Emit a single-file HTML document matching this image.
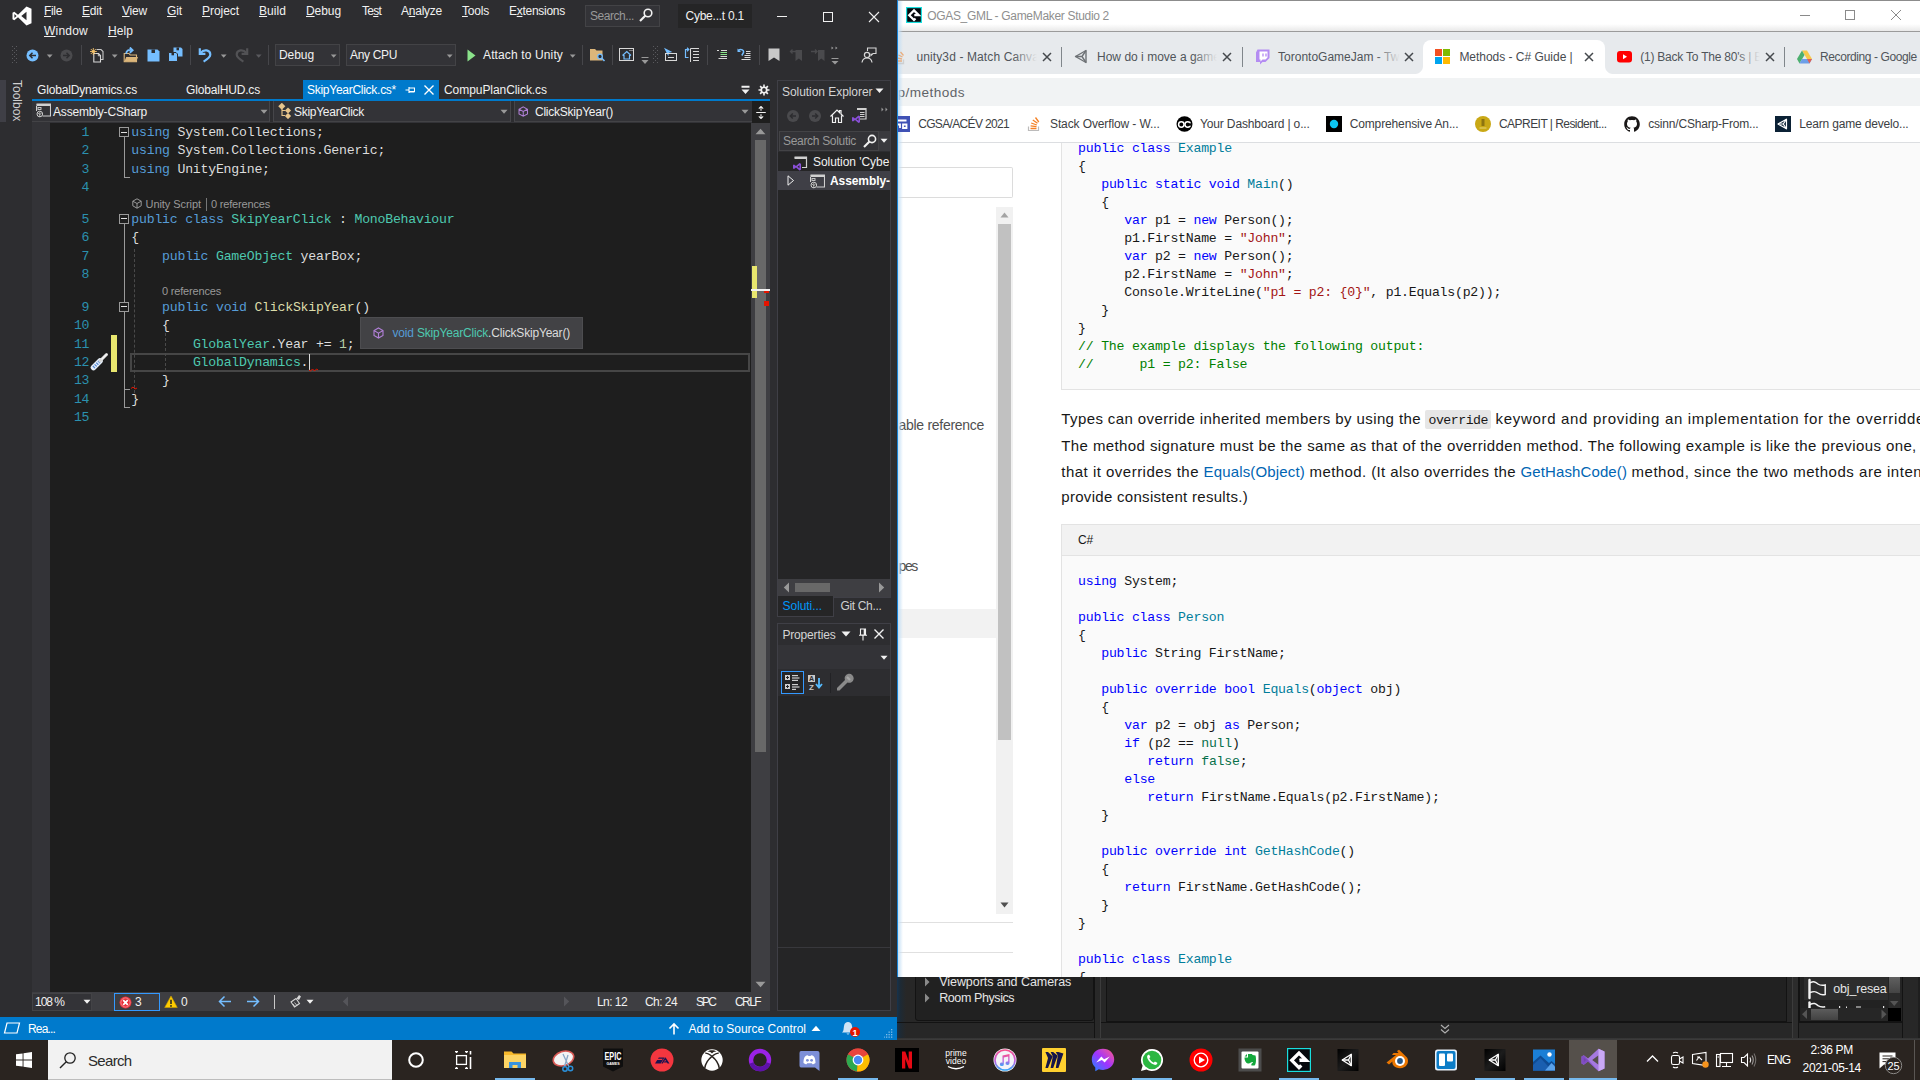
<!DOCTYPE html>
<html lang="en"><head><meta charset="utf-8"><title>Screenshot</title>
<style>
html,body{margin:0;padding:0;background:#2d2d30;}
body{width:1920px;height:1080px;position:relative;overflow:hidden;font-family:"Liberation Sans",sans-serif;}
.a{position:absolute;box-sizing:border-box;}
.t{white-space:pre;}
u{text-decoration:underline;text-underline-offset:1px;}
</style></head><body>
<div class="a" style="left:0px;top:0px;width:897px;height:1040px;background:#2d2d30;"></div>
<div class="a t" style="left:44px;top:3.00px;font:12px/16px 'Liberation Sans',sans-serif;color:#f1f1f1;letter-spacing:-0.334px;"><u>F</u>ile</div>
<div class="a t" style="left:82px;top:3.00px;font:12px/16px 'Liberation Sans',sans-serif;color:#f1f1f1;letter-spacing:-0.169px;"><u>E</u>dit</div>
<div class="a t" style="left:122px;top:3.00px;font:12px/16px 'Liberation Sans',sans-serif;color:#f1f1f1;letter-spacing:-0.198px;"><u>V</u>iew</div>
<div class="a t" style="left:167px;top:3.00px;font:12px/16px 'Liberation Sans',sans-serif;color:#f1f1f1;letter-spacing:-0.111px;"><u>G</u>it</div>
<div class="a t" style="left:202px;top:3.00px;font:12px/16px 'Liberation Sans',sans-serif;color:#f1f1f1;letter-spacing:-0.050px;"><u>P</u>roject</div>
<div class="a t" style="left:259px;top:3.00px;font:12px/16px 'Liberation Sans',sans-serif;color:#f1f1f1;letter-spacing:0.063px;"><u>B</u>uild</div>
<div class="a t" style="left:306px;top:3.00px;font:12px/16px 'Liberation Sans',sans-serif;color:#f1f1f1;letter-spacing:-0.072px;"><u>D</u>ebug</div>
<div class="a t" style="left:362px;top:3.00px;font:12px/16px 'Liberation Sans',sans-serif;color:#f1f1f1;letter-spacing:-0.752px;">Te<u>s</u>t</div>
<div class="a t" style="left:401px;top:3.00px;font:12px/16px 'Liberation Sans',sans-serif;color:#f1f1f1;letter-spacing:-0.242px;">A<u>n</u>alyze</div>
<div class="a t" style="left:462px;top:3.00px;font:12px/16px 'Liberation Sans',sans-serif;color:#f1f1f1;letter-spacing:-0.203px;"><u>T</u>ools</div>
<div class="a t" style="left:509px;top:3.00px;font:12px/16px 'Liberation Sans',sans-serif;color:#f1f1f1;letter-spacing:-0.270px;">E<u>x</u>tensions</div>
<div class="a t" style="left:44px;top:23.00px;font:12px/16px 'Liberation Sans',sans-serif;color:#f1f1f1;letter-spacing:0.220px;"><u>W</u>indow</div>
<div class="a t" style="left:108px;top:23.00px;font:12px/16px 'Liberation Sans',sans-serif;color:#f1f1f1;letter-spacing:0.080px;"><u>H</u>elp</div>
<div class="a" style="left:585px;top:5px;width:75px;height:22px;background:#333337;border:1px solid #434346;"></div>
<div class="a t" style="left:590px;top:8.00px;font:12px/16px 'Liberation Sans',sans-serif;color:#999999;letter-spacing:-0.447px;">Search...</div>
<div class="a" style="left:678px;top:4px;width:74px;height:24px;background:#252526;"></div>
<div class="a t" style="left:685.5px;top:8.00px;font:12px/16px 'Liberation Sans',sans-serif;color:#f1f1f1;letter-spacing:-0.239px;">Cybe...t 0.1</div>
<div class="a" style="left:275px;top:44px;width:65px;height:22px;background:#333337;border:1px solid #434346;"></div>
<div class="a t" style="left:279px;top:47.00px;font:12px/16px 'Liberation Sans',sans-serif;color:#f1f1f1;letter-spacing:-0.072px;">Debug</div>
<div class="a" style="left:346px;top:44px;width:110px;height:22px;background:#333337;border:1px solid #434346;"></div>
<div class="a t" style="left:350px;top:47.00px;font:12px/16px 'Liberation Sans',sans-serif;color:#f1f1f1;letter-spacing:-0.335px;">Any CPU</div>
<div class="a t" style="left:483px;top:47.00px;font:12px/16px 'Liberation Sans',sans-serif;color:#f1f1f1;letter-spacing:0.131px;">Attach to Unity</div>
<div class="a" style="left:81px;top:45px;width:1px;height:20px;background:#46464a;"></div>
<div class="a" style="left:190px;top:45px;width:1px;height:20px;background:#46464a;"></div>
<div class="a" style="left:268px;top:45px;width:1px;height:20px;background:#46464a;"></div>
<div class="a" style="left:582px;top:45px;width:1px;height:20px;background:#46464a;"></div>
<div class="a" style="left:612px;top:45px;width:1px;height:20px;background:#46464a;"></div>
<div class="a" style="left:707px;top:45px;width:1px;height:20px;background:#46464a;"></div>
<div class="a" style="left:759px;top:45px;width:1px;height:20px;background:#46464a;"></div>
<div class="a" style="left:0px;top:80px;width:6px;height:42px;background:#3f3f46;"></div>
<div class="a t" style="left:10px;top:80px;width:14px;height:42px;writing-mode:vertical-rl;font:12px/14px 'Liberation Sans',sans-serif;color:#d0d0d0;letter-spacing:0;">Toolbox</div>
<div class="a t" style="left:37px;top:82.00px;font:12px/16px 'Liberation Sans',sans-serif;color:#f1f1f1;letter-spacing:-0.159px;">GlobalDynamics.cs</div>
<div class="a t" style="left:186px;top:82.00px;font:12px/16px 'Liberation Sans',sans-serif;color:#f1f1f1;letter-spacing:-0.168px;">GlobalHUD.cs</div>
<div class="a" style="left:303px;top:80px;width:136px;height:20px;background:#007acc;"></div>
<div class="a t" style="left:307px;top:82.00px;font:12px/16px 'Liberation Sans',sans-serif;color:#ffffff;letter-spacing:-0.270px;">SkipYearClick.cs*</div>
<div class="a t" style="left:444px;top:82.00px;font:12px/16px 'Liberation Sans',sans-serif;color:#f1f1f1;letter-spacing:-0.061px;">CompuPlanClick.cs</div>
<div class="a" style="left:32px;top:99px;width:738px;height:2px;background:#007acc;"></div>
<div class="a" style="left:32px;top:101px;width:738px;height:22px;background:#333337;"></div>
<div class="a" style="left:32px;top:121px;width:720px;height:1px;background:#434346;"></div>
<div class="a" style="left:32px;top:122px;width:720px;height:1px;background:#333337;"></div>
<div class="a" style="left:269px;top:101px;width:1px;height:21px;background:#46464a;"></div>
<div class="a" style="left:273px;top:101px;width:1px;height:21px;background:#46464a;"></div>
<div class="a" style="left:270px;top:101px;width:3px;height:21px;background:#2d2d30;"></div>
<div class="a" style="left:510px;top:101px;width:1px;height:21px;background:#46464a;"></div>
<div class="a" style="left:514px;top:101px;width:1px;height:21px;background:#46464a;"></div>
<div class="a" style="left:511px;top:101px;width:3px;height:21px;background:#2d2d30;"></div>
<div class="a" style="left:752px;top:101px;width:18px;height:22px;background:#1e1e1e;"></div>
<div class="a t" style="left:53px;top:104.00px;font:12px/16px 'Liberation Sans',sans-serif;color:#f1f1f1;letter-spacing:-0.180px;">Assembly-CSharp</div>
<div class="a t" style="left:294px;top:104.00px;font:12px/16px 'Liberation Sans',sans-serif;color:#f1f1f1;letter-spacing:-0.276px;">SkipYearClick</div>
<div class="a t" style="left:535px;top:104.00px;font:12px/16px 'Liberation Sans',sans-serif;color:#f1f1f1;letter-spacing:-0.239px;">ClickSkipYear()</div>
<div class="a" style="left:32px;top:123px;width:719px;height:869px;background:#1e1e1e;"></div>
<div class="a" style="left:32px;top:123px;width:18px;height:869px;background:#333337;"></div>
<div class="a" style="left:751px;top:123px;width:19px;height:869px;background:#3e3e42;"></div>
<div class="a" style="left:755px;top:140px;width:11px;height:612px;background:#686868;"></div>
<div class="a" style="left:111px;top:334.5px;width:6px;height:37px;background:#e8e66e;"></div>
<div class="a" style="left:130px;top:353px;width:620px;height:18.5px;background:transparent;border:2px solid #464646;"></div>
<div class="a t" style="left:131.30px;top:124.00px;font:13.2px/17px 'Liberation Mono',monospace;letter-spacing:-0.221px;color:#dcdcdc"><span style="color:#569cd6">using</span> System.Collections;</div>
<div class="a t" style="left:131.30px;top:142.00px;font:13.2px/17px 'Liberation Mono',monospace;letter-spacing:-0.221px;color:#dcdcdc"><span style="color:#569cd6">using</span> System.Collections.Generic;</div>
<div class="a t" style="left:131.30px;top:161.00px;font:13.2px/17px 'Liberation Mono',monospace;letter-spacing:-0.221px;color:#dcdcdc"><span style="color:#569cd6">using</span> UnityEngine;</div>
<div class="a t" style="left:131.30px;top:211.00px;font:13.2px/17px 'Liberation Mono',monospace;letter-spacing:-0.221px;color:#dcdcdc"><span style="color:#569cd6">public class</span> <span style="color:#4ec9b0">SkipYearClick</span> : <span style="color:#4ec9b0">MonoBehaviour</span></div>
<div class="a t" style="left:131.30px;top:229.00px;font:13.2px/17px 'Liberation Mono',monospace;letter-spacing:-0.221px;color:#dcdcdc">{</div>
<div class="a t" style="left:162.10px;top:248.00px;font:13.2px/17px 'Liberation Mono',monospace;letter-spacing:-0.221px;color:#dcdcdc"><span style="color:#569cd6">public</span> <span style="color:#4ec9b0">GameObject</span> yearBox;</div>
<div class="a t" style="left:162.10px;top:299.00px;font:13.2px/17px 'Liberation Mono',monospace;letter-spacing:-0.221px;color:#dcdcdc"><span style="color:#569cd6">public void</span> <span style="color:#dcdcaa">ClickSkipYear</span>()</div>
<div class="a t" style="left:162.10px;top:317.00px;font:13.2px/17px 'Liberation Mono',monospace;letter-spacing:-0.221px;color:#dcdcdc">{</div>
<div class="a t" style="left:192.90px;top:336.00px;font:13.2px/17px 'Liberation Mono',monospace;letter-spacing:-0.221px;color:#dcdcdc"><span style="color:#4ec9b0">GlobalYear</span>.Year += <span style="color:#b5cea8">1</span>;</div>
<div class="a t" style="left:192.90px;top:354.00px;font:13.2px/17px 'Liberation Mono',monospace;letter-spacing:-0.221px;color:#dcdcdc"><span style="color:#4ec9b0">GlobalDynamics</span>.</div>
<div class="a t" style="left:162.10px;top:372.00px;font:13.2px/17px 'Liberation Mono',monospace;letter-spacing:-0.221px;color:#dcdcdc">}</div>
<div class="a t" style="left:131.30px;top:391.00px;font:13.2px/17px 'Liberation Mono',monospace;letter-spacing:-0.221px;color:#dcdcdc">}</div>
<div class="a t" style="left:81.60px;top:124.00px;font:13.2px/17px 'Liberation Mono',monospace;letter-spacing:-0.221px;color:#2b91af">1</div>
<div class="a t" style="left:81.60px;top:142.00px;font:13.2px/17px 'Liberation Mono',monospace;letter-spacing:-0.221px;color:#2b91af">2</div>
<div class="a t" style="left:81.60px;top:161.00px;font:13.2px/17px 'Liberation Mono',monospace;letter-spacing:-0.221px;color:#2b91af">3</div>
<div class="a t" style="left:81.60px;top:179.00px;font:13.2px/17px 'Liberation Mono',monospace;letter-spacing:-0.221px;color:#2b91af">4</div>
<div class="a t" style="left:81.60px;top:211.00px;font:13.2px/17px 'Liberation Mono',monospace;letter-spacing:-0.221px;color:#2b91af">5</div>
<div class="a t" style="left:81.60px;top:229.00px;font:13.2px/17px 'Liberation Mono',monospace;letter-spacing:-0.221px;color:#2b91af">6</div>
<div class="a t" style="left:81.60px;top:248.00px;font:13.2px/17px 'Liberation Mono',monospace;letter-spacing:-0.221px;color:#2b91af">7</div>
<div class="a t" style="left:81.60px;top:266.00px;font:13.2px/17px 'Liberation Mono',monospace;letter-spacing:-0.221px;color:#2b91af">8</div>
<div class="a t" style="left:81.60px;top:299.00px;font:13.2px/17px 'Liberation Mono',monospace;letter-spacing:-0.221px;color:#2b91af">9</div>
<div class="a t" style="left:73.90px;top:317.00px;font:13.2px/17px 'Liberation Mono',monospace;letter-spacing:-0.221px;color:#2b91af">10</div>
<div class="a t" style="left:73.90px;top:336.00px;font:13.2px/17px 'Liberation Mono',monospace;letter-spacing:-0.221px;color:#2b91af">11</div>
<div class="a t" style="left:73.90px;top:354.00px;font:13.2px/17px 'Liberation Mono',monospace;letter-spacing:-0.221px;color:#2b91af">12</div>
<div class="a t" style="left:73.90px;top:372.00px;font:13.2px/17px 'Liberation Mono',monospace;letter-spacing:-0.221px;color:#2b91af">13</div>
<div class="a t" style="left:73.90px;top:391.00px;font:13.2px/17px 'Liberation Mono',monospace;letter-spacing:-0.221px;color:#2b91af">14</div>
<div class="a t" style="left:73.90px;top:409.00px;font:13.2px/17px 'Liberation Mono',monospace;letter-spacing:-0.221px;color:#2b91af">15</div>
<div class="a t" style="left:145.5px;top:197.00px;font:11px/14px 'Liberation Sans',sans-serif;color:#999999;letter-spacing:-0.061px;">Unity Script</div>
<div class="a" style="left:206px;top:198px;width:1px;height:13px;background:#777777;"></div>
<div class="a t" style="left:211px;top:197.00px;font:11px/14px 'Liberation Sans',sans-serif;color:#999999;letter-spacing:-0.179px;">0 references</div>
<div class="a t" style="left:162px;top:284.00px;font:11px/14px 'Liberation Sans',sans-serif;color:#999999;letter-spacing:-0.179px;">0 references</div>
<div class="a" style="left:308.5px;top:354px;width:1px;height:16px;background:#dcdcdc;"></div>
<div class="a" style="left:360px;top:317px;width:223px;height:32px;background:#424245;border:1px solid #4d4d50;"></div>
<div class="a t" style="left:392.5px;top:325.00px;font:12px/16px 'Liberation Sans',sans-serif;color:#dcdcdc;letter-spacing:-0.187px;"><span style="color:#569cd6">void</span> <span style="color:#4ec9b0">SkipYearClick</span><span style="color:#dcdcdc">.ClickSkipYear()</span></div>
<div class="a" style="left:32px;top:992px;width:738px;height:19px;background:#3e3e42;"></div>
<div class="a" style="left:32px;top:993px;width:60px;height:18px;background:#333337;border:1px solid #434346;"></div>
<div class="a t" style="left:35px;top:994.00px;font:12px/16px 'Liberation Sans',sans-serif;color:#f1f1f1;letter-spacing:-1.005px;">108 %</div>
<div class="a" style="left:114px;top:993px;width:46px;height:18px;background:transparent;border:1px solid #3399ff;"></div>
<div class="a t" style="left:135px;top:994.00px;font:12px/16px 'Liberation Sans',sans-serif;color:#f1f1f1;">3</div>
<div class="a t" style="left:181px;top:994.00px;font:12px/16px 'Liberation Sans',sans-serif;color:#f1f1f1;">0</div>
<div class="a" style="left:274px;top:995px;width:1px;height:14px;background:#c8c8c8;"></div>
<div class="a t" style="left:597px;top:994.00px;font:12px/16px 'Liberation Sans',sans-serif;color:#f1f1f1;letter-spacing:-0.561px;">Ln: 12</div>
<div class="a t" style="left:645px;top:994.00px;font:12px/16px 'Liberation Sans',sans-serif;color:#f1f1f1;letter-spacing:-0.559px;">Ch: 24</div>
<div class="a t" style="left:696px;top:994.00px;font:12px/16px 'Liberation Sans',sans-serif;color:#f1f1f1;letter-spacing:-1.891px;">SPC</div>
<div class="a t" style="left:735px;top:994.00px;font:12px/16px 'Liberation Sans',sans-serif;color:#f1f1f1;letter-spacing:-1.584px;">CRLF</div>
<div class="a" style="left:0px;top:1017px;width:897px;height:23px;background:#007acc;"></div>
<div class="a t" style="left:28px;top:1021.00px;font:12px/16px 'Liberation Sans',sans-serif;color:#ffffff;letter-spacing:-0.836px;">Rea...</div>
<div class="a t" style="left:688.5px;top:1021.00px;font:12px/16px 'Liberation Sans',sans-serif;color:#ffffff;letter-spacing:-0.027px;">Add to Source Control</div>
<div class="a" style="left:777px;top:80px;width:114px;height:518px;background:#2d2d30;border:1px solid #3f3f46;"></div>
<div class="a t" style="left:782px;top:84.00px;font:12px/16px 'Liberation Sans',sans-serif;color:#d4d4d4;letter-spacing:-0.052px;">Solution Explorer</div>
<svg class="a" style="left:875px;top:88px;" width="9" height="6" viewBox="0 0 9 6"><path d="M0.500 0.500 H8.500 L4.500 5Z" fill="#f1f1f1"/></svg>
<div class="a" style="left:779px;top:131px;width:100px;height:20px;background:#333337;border:1px solid #434346;"></div>
<div class="a" style="left:879px;top:131px;width:11px;height:20px;background:#3a3a3e;"></div>
<div class="a t" style="left:783px;top:133.00px;font:12px/16px 'Liberation Sans',sans-serif;color:#999999;letter-spacing:-0.312px;">Search Solutic</div>
<div class="a" style="left:778px;top:152px;width:112px;height:427px;background:#252526;"></div>
<div class="a" style="left:778px;top:171px;width:112px;height:19px;background:#3f3f46;"></div>
<div class="a t" style="left:813px;top:154.00px;font:12px/16px 'Liberation Sans',sans-serif;color:#f1f1f1;letter-spacing:-0.050px;">Solution 'Cybe</div>
<div class="a" style="left:830px;top:172px;width:60px;height:18px;overflow:hidden"><div class="t" style="font:bold 12px/18px 'Liberation Sans',sans-serif;color:#fff;letter-spacing:-0.080px">Assembly-C</div></div>
<svg class="a" style="left:787px;top:175px;" width="8" height="11" viewBox="0 0 8 11"><path d="M1 0.800 L6.500 5.500 L1 10.200Z" fill="none" stroke="#f1f1f1" stroke-width="1"/></svg>
<div class="a" style="left:778px;top:579px;width:112px;height:18px;background:#3e3e42;"></div>
<div class="a" style="left:795px;top:583px;width:35px;height:9px;background:#686868;"></div>
<svg class="a" style="left:783px;top:582px;" width="8" height="11" viewBox="0 0 8 11"><path d="M6 0.500 V10.500 L0.800 5.500Z" fill="#999"/></svg>
<svg class="a" style="left:877px;top:582px;" width="8" height="11" viewBox="0 0 8 11"><path d="M2 0.500 V10.500 L7.200 5.500Z" fill="#999"/></svg>
<div class="a" style="left:777px;top:596px;width:57px;height:21px;background:#252526;border:1px solid #3f3f46;"></div>
<div class="a" style="left:778px;top:596px;width:55px;height:2px;background:#252526;"></div>
<div class="a t" style="left:782.6px;top:598.00px;font:12px/16px 'Liberation Sans',sans-serif;color:#0097fb;letter-spacing:-0.069px;">Soluti...</div>
<div class="a t" style="left:840.4px;top:598.00px;font:12px/16px 'Liberation Sans',sans-serif;color:#d0d0d0;letter-spacing:-0.323px;">Git Ch...</div>
<div class="a" style="left:777px;top:623px;width:114px;height:388px;background:#2d2d30;border:1px solid #3f3f46;"></div>
<div class="a t" style="left:782.4px;top:627.00px;font:12px/16px 'Liberation Sans',sans-serif;color:#d4d4d4;letter-spacing:-0.159px;">Properties</div>
<svg class="a" style="left:841px;top:631px;" width="10" height="6" viewBox="0 0 10 6"><path d="M0.500 0.500 H9.500 L5 5.500Z" fill="#f1f1f1"/></svg>
<svg class="a" style="left:858px;top:628px;" width="10" height="13" viewBox="0 0 10 13"><g fill="none" stroke="#f1f1f1" stroke-width="1.100"><path d="M2.500 1 H7.500 V7 H2.500Z M1 7.200 H9 M5 7.200 V12.500"/><path d="M6.500 1 V7" stroke-width="1.600"/></g></svg>
<svg class="a" style="left:873px;top:628px;" width="12" height="12" viewBox="0 0 12 12"><path d="M1.500 1.500 L10.500 10.500 M10.500 1.500 L1.500 10.500" stroke="#f1f1f1" stroke-width="1.400"/></svg>
<div class="a" style="left:778px;top:645px;width:112px;height:24px;background:#333337;"></div>
<svg class="a" style="left:880px;top:655px;" width="8" height="6" viewBox="0 0 8 6"><path d="M0.500 0.800 H7.500 L4 4.800Z" fill="#f1f1f1"/></svg>
<div class="a" style="left:778px;top:669px;width:112px;height:27px;background:#2d2d30;"></div>
<div class="a" style="left:781px;top:671px;width:23px;height:23px;background:#252526;border:1px solid #3399ff;"></div>
<div class="a" style="left:778px;top:696px;width:112px;height:314px;background:#252526;"></div>
<div class="a" style="left:830px;top:673px;width:1px;height:20px;background:#222225;"></div>
<div class="a" style="left:778px;top:947px;width:112px;height:1px;background:#38383c;"></div>
<svg class="a" style="left:784px;top:674px;" width="18" height="17" viewBox="0 0 18 17"><g fill="#d0d0d0"><rect x="1" y="1" width="5" height="5"/><rect x="1" y="10" width="5" height="5"/><rect x="8" y="1" width="6" height="1.200"/><rect x="8" y="3.400" width="7.500" height="1.200"/><rect x="8" y="5.800" width="6" height="1.200"/><rect x="8" y="10" width="6" height="1.200"/><rect x="8" y="12.400" width="7.500" height="1.200"/><rect x="8" y="14.800" width="4" height="1.200"/></g><path d="M2 3.500 H5 M3.500 2 V5 M2 12.500 H5 M3.500 11 V14" stroke="#252526" stroke-width="1"/></svg>
<svg class="a" style="left:807px;top:674px;" width="17" height="17" viewBox="0 0 17 17"><rect x="1" y="1" width="7" height="7" fill="#c8c8c8"/><text x="4.500" y="7.200" font-family="Liberation Sans,sans-serif" font-weight="700" font-size="7" fill="#2d2d30" text-anchor="middle">A</text><text x="4.500" y="15.500" font-family="Liberation Sans,sans-serif" font-weight="700" font-size="8" fill="#c8c8c8" text-anchor="middle">Z</text><path d="M12 4 V13 M9 10 L12 13.500 L15 10" fill="none" stroke="#55bbff" stroke-width="1.800"/></svg>
<svg class="a" style="left:835px;top:673px;" width="19" height="19" viewBox="0 0 19 19"><path d="M2 16 L10 8 A4.500 4.500 0 1 1 12.500 10.500 L4.500 18.500 L2 18.500Z" fill="#8a8a8a" transform="translate(0 -1)"/><path d="M12 4 L15 7" stroke="#a8a8a8" stroke-width="2.200"/></svg>
<svg class="a" style="left:786px;top:109px;" width="14" height="14" viewBox="0 0 14 14"><circle cx="7" cy="7" r="6" fill="#4a4a4d"/><path d="M10 7 H4.500 M6.800 4.500 L4.300 7 L6.800 9.500" fill="none" stroke="#2d2d30" stroke-width="1.500"/></svg>
<svg class="a" style="left:808px;top:109px;" width="14" height="14" viewBox="0 0 14 14"><circle cx="7" cy="7" r="6" fill="#4a4a4d"/><path d="M4 7 H9.500 M7.200 4.500 L9.700 7 L7.200 9.500" fill="none" stroke="#2d2d30" stroke-width="1.500"/></svg>
<svg class="a" style="left:829px;top:108px;" width="16" height="16" viewBox="0 0 16 16"><path d="M1.500 8.500 L8 2 L10.500 4.500 V2.500 H12 V6 L14.500 8.500 M3.500 7.500 V14.500 H6.500 V10 H9.500 V14.500 H12.500 V7.500" fill="none" stroke="#f1f1f1" stroke-width="1.200"/></svg>
<svg class="a" style="left:851px;top:107px;" width="17" height="17" viewBox="0 0 17 17"><path d="M6 1.500 H15 V12 H9" fill="none" stroke="#d0d0d0" stroke-width="1.200"/><path d="M6 1.500 H15 V3 H6Z" fill="#d0d0d0"/><path d="M9 5.500 H13.500 M9 7.500 H13.500 M9 9.500 H13.500" stroke="#d0d0d0" stroke-width="1"/><path d="M7.500 8.500 L9 9.200 V15.300 L7.500 16 L4 13 L2 14.500 L1 14 V10.500 L2 10 L4 11.500Z M7.500 10.800 L5.500 12.250 L7.500 13.700Z" fill="#8a50d8" fill-rule="evenodd"/></svg>
<svg class="a" style="left:881px;top:107px;" width="8" height="6" viewBox="0 0 8 6"><path d="M0.500 0.500 L2.500 2.500 L0.500 4.500Z M4.500 0.500 L6.500 2.500 L4.500 4.500Z" fill="#999"/></svg>
<svg class="a" style="left:862px;top:133px;" width="16" height="16" viewBox="0 0 16 16"><circle cx="10" cy="6" r="3.600" fill="none" stroke="#f1f1f1" stroke-width="1.600"/><path d="M7.500 8.500 L2 14" stroke="#f1f1f1" stroke-width="2.200"/></svg>
<svg class="a" style="left:880px;top:138px;" width="8" height="6" viewBox="0 0 8 6"><path d="M0.500 0.800 H7.500 L4 4.800Z" fill="#f1f1f1"/></svg>
<svg class="a" style="left:792px;top:155px;" width="16" height="16" viewBox="0 0 16 16"><path d="M2.500 2 H14.500 V12.500 H10" fill="none" stroke="#d0d0d0" stroke-width="1.200"/><path d="M2.500 2 H14.500 V4 H2.500Z" fill="#d0d0d0"/><path d="M7.500 8 L9 8.700 V14.800 L7.500 15.500 L4 12.500 L2 14 L1 13.500 V10 L2 9.500 L4 11Z M7.500 10.300 L5.500 11.750 L7.500 13.200Z" fill="#8a50d8" fill-rule="evenodd"/></svg>
<svg class="a" style="left:810px;top:174px;" width="15" height="15" viewBox="0 0 15 15"><path d="M0.500 1 H14.500 V13 H6.500" fill="none" stroke="#d0d0d0" stroke-width="1.100"/><path d="M0.500 1 H14.500 V3 H0.500Z" fill="#d0d0d0"/><path d="M0.500 3 V8" stroke="#d0d0d0" stroke-width="1.100"/><rect x="2" y="4.500" width="3" height="2" fill="none" stroke="#d0d0d0" stroke-width="0.900"/><circle cx="3.800" cy="11" r="2.800" fill="#2d2d30" stroke="#d0d0d0" stroke-width="1"/><path d="M3.800 9 V14 M2 10.200 L3.800 11.500 L5.600 10.200" fill="none" stroke="#d0d0d0" stroke-width="0.800"/></svg>
<svg class="a" style="left:36px;top:103px;" width="15" height="15" viewBox="0 0 15 15"><path d="M0.500 1 H14.500 V13 H6.500" fill="none" stroke="#d0d0d0" stroke-width="1.100"/><path d="M0.500 1 H14.500 V3 H0.500Z" fill="#d0d0d0"/><path d="M0.500 3 V8" stroke="#d0d0d0" stroke-width="1.100"/><rect x="2" y="4.500" width="3" height="2" fill="none" stroke="#d0d0d0" stroke-width="0.900"/><circle cx="3.800" cy="11" r="2.800" fill="#2d2d30" stroke="#d0d0d0" stroke-width="1"/><path d="M3.800 9 V14 M2 10.200 L3.800 11.500 L5.600 10.200" fill="none" stroke="#d0d0d0" stroke-width="0.800"/></svg>
<svg class="a" style="left:741px;top:85px;" width="10" height="10" viewBox="0 0 10 10"><path d="M0.500 0.800 H8.500 V2.800 H0.500Z M0.500 4.500 H8.500 L4.500 9Z" fill="#f1f1f1"/></svg>
<svg class="a" style="left:758px;top:84px;" width="12" height="12" viewBox="0 0 12 12"><g fill="#f1f1f1"><circle cx="6" cy="6" r="3.600"/><path d="M5.200 0.500 H6.800 V11.500 H5.200Z M0.500 5.200 H11.500 V6.800 H0.500Z"/><path d="M5.200 0.500 H6.800 V11.500 H5.200Z M0.500 5.200 H11.500 V6.800 H0.500Z" transform="rotate(45 6 6)"/></g><circle cx="6" cy="6" r="1.900" fill="#2d2d30"/></svg>
<svg class="a" style="left:405px;top:85px;" width="10" height="10" viewBox="0 0 10 10"><path d="M0.500 5 H4 M4 2 V8 M4 3 H9.500 V6.500 H4 M4 7 H9.500" fill="none" stroke="#fff" stroke-width="1.100"/></svg>
<svg class="a" style="left:423px;top:84px;" width="12" height="12" viewBox="0 0 12 12"><path d="M1.500 1.500 L10.500 10.500 M10.500 1.500 L1.500 10.500" stroke="#fff" stroke-width="1.400"/></svg>
<svg class="a" style="left:260px;top:109px;" width="8" height="6" viewBox="0 0 8 6"><path d="M0.500 0.800 H7.500 L4 4.800Z" fill="#999"/></svg>
<svg class="a" style="left:500px;top:109px;" width="8" height="6" viewBox="0 0 8 6"><path d="M0.500 0.800 H7.500 L4 4.800Z" fill="#999"/></svg>
<svg class="a" style="left:741px;top:109px;" width="8" height="6" viewBox="0 0 8 6"><path d="M0.500 0.800 H7.500 L4 4.800Z" fill="#999"/></svg>
<svg class="a" style="left:276px;top:103px;" width="16" height="16" viewBox="0 0 16 16"><g fill="#e8c58c"><rect x="3.300" y="0.800" width="5" height="5" transform="rotate(45 5.800 3.300)"/><rect x="9.800" y="5.300" width="4.400" height="4.400" transform="rotate(45 12 7.500)"/><rect x="9.800" y="10.800" width="4.400" height="4.400" transform="rotate(45 12 13)"/></g><path d="M6 6 V12.500 H9 M6 7.500 H9" fill="none" stroke="#e8c58c" stroke-width="1.100"/></svg>
<svg class="a" style="left:517.5px;top:106px;" width="10.5" height="11" viewBox="0 0 12 13"><path d="M6 1 L11 3.800 V9.300 L6 12 L1 9.300 V3.800Z M1 3.800 L6 6.500 L11 3.800 M6 6.500 V12" fill="none" stroke="#b180d7" stroke-width="1.200"/></svg>
<svg class="a" style="left:755px;top:105.5px;" width="12" height="13" viewBox="0 0 12 15"><path d="M6 0.500 V5.500 M3.500 3 L6 0.500 L8.500 3 M0.500 7.500 H11.500 M6 9.500 V14.500 M3.500 12 L6 14.500 L8.500 12" fill="none" stroke="#f1f1f1" stroke-width="1.200"/></svg>
<svg class="a" style="left:755px;top:128px;" width="11" height="7" viewBox="0 0 11 7"><path d="M5.500 0.800 L10.500 6.200 H0.500Z" fill="#999"/></svg>
<svg class="a" style="left:755px;top:981px;" width="11" height="7" viewBox="0 0 11 7"><path d="M5.500 6.200 L10.500 0.800 H0.500Z" fill="#999"/></svg>
<div class="a" style="left:752px;top:266px;width:5px;height:32px;background:#e8e66e;"></div>
<div class="a" style="left:751px;top:288.5px;width:19px;height:2px;background:#f1f1f1;"></div>
<div class="a" style="left:764px;top:290.5px;width:5px;height:2.5px;background:#e51400;"></div>
<div class="a" style="left:764px;top:300.5px;width:5px;height:5.5px;background:#e51400;"></div>
<div class="a" style="left:119px;top:127px;width:10px;height:10px;background:#1e1e1e;border:1px solid #9a9a9a;"></div>
<div class="a" style="left:121px;top:131.5px;width:6px;height:1px;background:#e0e0e0;"></div>
<div class="a" style="left:119px;top:213.5px;width:10px;height:10px;background:#1e1e1e;border:1px solid #9a9a9a;"></div>
<div class="a" style="left:121px;top:218px;width:6px;height:1px;background:#e0e0e0;"></div>
<div class="a" style="left:119px;top:301.5px;width:10px;height:10px;background:#1e1e1e;border:1px solid #9a9a9a;"></div>
<div class="a" style="left:121px;top:306px;width:6px;height:1px;background:#e0e0e0;"></div>
<div class="a" style="left:123.5px;top:137px;width:1px;height:41px;background:#9a9a9a;"></div>
<div class="a" style="left:123.5px;top:177px;width:6px;height:1px;background:#9a9a9a;"></div>
<div class="a" style="left:123.5px;top:223.5px;width:1px;height:78px;background:#9a9a9a;"></div>
<div class="a" style="left:123.5px;top:311.5px;width:1px;height:96px;background:#9a9a9a;"></div>
<div class="a" style="left:123.5px;top:407px;width:6px;height:1px;background:#9a9a9a;"></div>
<div class="a" style="left:134px;top:249px;width:0;height:149px;border-left:1px dashed #4a4a4a"></div>
<div class="a" style="left:165px;top:333px;width:0;height:38px;border-left:1px dashed #4a4a4a"></div>
<svg class="a" style="left:309px;top:368px;" width="10" height="4" viewBox="0 0 10 4"><path d="M0 2 L1.500 3 L3.500 1 L5.500 3 L7.500 1 L9 2" fill="none" stroke="#e51400" stroke-width="1"/></svg>
<svg class="a" style="left:131px;top:386px;" width="8" height="4" viewBox="0 0 8 4"><path d="M0 2.500 L2 1 L4 3 L6 2" fill="none" stroke="#e51400" stroke-width="1"/></svg>
<div class="a" style="left:123.5px;top:388.5px;width:6px;height:1px;background:#9a9a9a;"></div>
<svg class="a" style="left:90px;top:352px;" width="19" height="19" viewBox="0 0 19 19"><path d="M3.500 15.500 L10 9" stroke="#e6eef8" stroke-width="5.500" stroke-linecap="round"/><path d="M3.500 15.500 L10 9" stroke="#4f86d6" stroke-width="3" stroke-dasharray="1.200 1.200"/><path d="M10 9 L16.500 2.500" stroke="#d8d8d8" stroke-width="3" stroke-linecap="round"/><path d="M12 7 L16.500 2.500" stroke="#f4f4f4" stroke-width="1.600" stroke-linecap="round"/></svg>
<svg class="a" style="left:132px;top:198px;" width="10" height="11" viewBox="0 0 10 11"><path d="M5 0.800 L9.200 3.200 V7.800 L5 10.200 L0.800 7.800 V3.200Z M0.800 3.200 L5 5.500 L9.200 3.200 M5 5.500 V10.200" fill="none" stroke="#999" stroke-width="1"/></svg>
<svg class="a" style="left:373px;top:327px;" width="11" height="12" viewBox="0 0 11 12"><path d="M5.500 1 L10 3.600 V8.400 L5.500 11 L1 8.400 V3.600Z M1 3.600 L5.500 6.200 L10 3.600 M5.500 6.200 V11" fill="none" stroke="#b180d7" stroke-width="1.100"/></svg>
<svg class="a" style="left:83px;top:999px;" width="8" height="6" viewBox="0 0 8 6"><path d="M0.500 0.800 H7.500 L4 4.800Z" fill="#f1f1f1"/></svg>
<svg class="a" style="left:119px;top:996px;" width="13" height="13" viewBox="0 0 13 13"><circle cx="6.500" cy="6.500" r="6" fill="#e8303a"/><circle cx="6.500" cy="6.500" r="4.600" fill="none" stroke="#fff" stroke-width="0.800" opacity="0.500"/><path d="M4.200 4.200 L8.800 8.800 M8.800 4.200 L4.200 8.800" stroke="#fff" stroke-width="1.700"/></svg>
<svg class="a" style="left:164px;top:995px;" width="14" height="14" viewBox="0 0 14 14"><path d="M7 1 L13.300 12.500 H0.700Z" fill="#ffcc00" stroke="#caa000" stroke-width="0.600"/><path d="M7 4.800 V9" stroke="#222" stroke-width="1.500"/><circle cx="7" cy="10.900" r="0.900" fill="#222"/></svg>
<svg class="a" style="left:218px;top:995px;" width="14" height="13" viewBox="0 0 14 13"><path d="M13 6.500 H2 M6.500 1.500 L1.500 6.500 L6.500 11.500" fill="none" stroke="#75beff" stroke-width="1.500"/></svg>
<svg class="a" style="left:246px;top:995px;" width="14" height="13" viewBox="0 0 14 13"><path d="M1 6.500 H12 M7.500 1.500 L12.500 6.500 L7.500 11.500" fill="none" stroke="#75beff" stroke-width="1.500"/></svg>
<svg class="a" style="left:289px;top:994px;" width="14" height="15" viewBox="0 0 14 15"><path d="M2 8 L7 4.500 L10.500 9.500 L5.500 13Z" fill="none" stroke="#d8d8d8" stroke-width="1.100"/><path d="M7.500 4.500 L10 1 L12 2.500 L10 6" fill="#d8d8d8"/><path d="M4 10 L6 12.500 M5.500 8.500 L8 11.500" stroke="#d8d8d8" stroke-width="0.800"/></svg>
<svg class="a" style="left:306px;top:999px;" width="8" height="6" viewBox="0 0 8 6"><path d="M0.500 0.800 H7.500 L4 4.800Z" fill="#f1f1f1"/></svg>
<svg class="a" style="left:342px;top:996px;" width="7" height="11" viewBox="0 0 7 11"><path d="M6 0.500 V10.500 L0.800 5.500Z" fill="#55555a"/></svg>
<svg class="a" style="left:563px;top:996px;" width="7" height="11" viewBox="0 0 7 11"><path d="M1 0.500 V10.500 L6.200 5.500Z" fill="#55555a"/></svg>
<svg class="a" style="left:3px;top:1021px;" width="18" height="14" viewBox="0 0 18 14"><path d="M4 2 H16.500 L14 12 H1.500Z" fill="none" stroke="#fff" stroke-width="1.200"/></svg>
<svg class="a" style="left:668px;top:1022px;" width="12" height="13" viewBox="0 0 12 13"><path d="M6 12.500 V2 M1.500 6.500 L6 2 L10.500 6.500" fill="none" stroke="#fff" stroke-width="1.600"/></svg>
<svg class="a" style="left:811px;top:1025px;" width="10" height="7" viewBox="0 0 10 7"><path d="M5 0.800 L9.500 6 H0.500Z" fill="#fff"/></svg>
<svg class="a" style="left:840px;top:1020px;" width="22" height="19" viewBox="0 0 22 19"><path d="M2 12.500 C4 11 3.500 8 4 6 C4.500 3 6 2 8 2 C10 2 11.500 3 12 6 C12.500 8 12 11 14 12.500Z M6.500 13.500 A1.600 1.600 0 0 0 9.500 13.500Z" fill="#cfe3f5"/><circle cx="15" cy="12" r="5" fill="#e51400"/><text x="15" y="15.500" font-family="Liberation Sans,sans-serif" font-weight="700" font-size="9" fill="#fff" text-anchor="middle">1</text></svg>
<svg class="a" style="left:884px;top:1029px;" width="9" height="9" viewBox="0 0 9 9"><g fill="#7fbce8"><rect x="7" y="0" width="1.300" height="1.300"/><rect x="4.500" y="2.500" width="1.300" height="1.300"/><rect x="7" y="2.500" width="1.300" height="1.300"/><rect x="2" y="5" width="1.300" height="1.300"/><rect x="4.500" y="5" width="1.300" height="1.300"/><rect x="7" y="5" width="1.300" height="1.300"/><rect x="-0.500" y="7.500" width="1.300" height="1.300"/><rect x="2" y="7.500" width="1.300" height="1.300"/><rect x="4.500" y="7.500" width="1.300" height="1.300"/><rect x="7" y="7.500" width="1.300" height="1.300"/></g></svg>
<svg class="a" style="left:12px;top:6px;" width="20" height="20" viewBox="0 0 20 20"><path d="M14.500 0.500 L19.500 2.800 V17.200 L14.500 19.500 L6 11.300 L2.300 14.200 L0.500 13.300 V6.700 L2.300 5.800 L6 8.700Z M14.500 5.800 L9.300 10 L14.500 14.200Z M2.400 7.900 V12.100 L4.600 10Z" fill="#fff" fill-rule="evenodd"/></svg>
<svg class="a" style="left:638px;top:7px;" width="16" height="16" viewBox="0 0 16 16"><circle cx="10" cy="6" r="3.800" fill="none" stroke="#f1f1f1" stroke-width="1.600"/><path d="M7.500 8.500 L2 14" stroke="#f1f1f1" stroke-width="2.200"/></svg>
<div class="a" style="left:777px;top:16px;width:10px;height:1px;background:#f1f1f1;"></div>
<div class="a" style="left:823px;top:12px;width:10px;height:10px;background:transparent;border:1px solid #f1f1f1;"></div>
<svg class="a" style="left:868px;top:11px;" width="12" height="12" viewBox="0 0 12 12"><path d="M1 1 L11 11 M11 1 L1 11" stroke="#f1f1f1" stroke-width="1.100"/></svg>
<svg class="a" style="left:12px;top:46px;" width="5" height="18" viewBox="0 0 5 18"><g fill="#5a5a5e"><rect x="0" y="0" width="1" height="1"/><rect x="4" y="0" width="1" height="1"/><rect x="2" y="2" width="1" height="1"/><rect x="0" y="4" width="1" height="1"/><rect x="4" y="4" width="1" height="1"/><rect x="2" y="6" width="1" height="1"/><rect x="0" y="8" width="1" height="1"/><rect x="4" y="8" width="1" height="1"/><rect x="2" y="10" width="1" height="1"/><rect x="0" y="12" width="1" height="1"/><rect x="4" y="12" width="1" height="1"/><rect x="2" y="14" width="1" height="1"/><rect x="0" y="16" width="1" height="1"/><rect x="4" y="16" width="1" height="1"/></g></svg>
<svg class="a" style="left:653px;top:46px;" width="5" height="18" viewBox="0 0 5 18"><g fill="#5a5a5e"><rect x="0" y="0" width="1" height="1"/><rect x="4" y="0" width="1" height="1"/><rect x="2" y="2" width="1" height="1"/><rect x="0" y="4" width="1" height="1"/><rect x="4" y="4" width="1" height="1"/><rect x="2" y="6" width="1" height="1"/><rect x="0" y="8" width="1" height="1"/><rect x="4" y="8" width="1" height="1"/><rect x="2" y="10" width="1" height="1"/><rect x="0" y="12" width="1" height="1"/><rect x="4" y="12" width="1" height="1"/><rect x="2" y="14" width="1" height="1"/><rect x="0" y="16" width="1" height="1"/><rect x="4" y="16" width="1" height="1"/></g></svg>
<svg class="a" style="left:26px;top:48.5px;" width="13" height="13" viewBox="0 0 13 13"><circle cx="6.500" cy="6.500" r="6" fill="#75beff"/><path d="M10 6.500 H4 M6.500 3.800 L3.800 6.500 L6.500 9.200" fill="none" stroke="#2d2d30" stroke-width="1.500"/></svg>
<svg class="a" style="left:46px;top:53.5px;" width="8" height="6" viewBox="0 0 8 6"><path d="M0.800 0.500 H6.600 L3.700 3.800Z" fill="#999"/></svg>
<svg class="a" style="left:60px;top:48.5px;" width="13" height="13" viewBox="0 0 13 13"><circle cx="6.500" cy="6.500" r="6" fill="#4a4a4d"/><path d="M3 6.500 H9 M6.500 3.800 L9.200 6.500 L6.500 9.200" fill="none" stroke="#2d2d30" stroke-width="1.500"/></svg>
<svg class="a" style="left:90px;top:46.5px;" width="15" height="16" viewBox="0 0 15 16"><path d="M6.500 2.500 H11 L13 4.500 V12.500 H11" fill="none" stroke="#c8c8c8" stroke-width="1.100"/><path d="M3.800 6.500 H8.500 L10.500 8.500 V15 H3.800Z" fill="#2d2d30" stroke="#d8d8d8" stroke-width="1.100"/><path d="M8.300 6.500 V8.800 H10.500" fill="none" stroke="#d8d8d8" stroke-width="0.900"/><path d="M3.300 1 V8 M-0.200 4.500 H6.800 M0.800 2 L5.800 7 M5.800 2 L0.800 7" stroke="#f5c36b" stroke-width="0.900"/><circle cx="3.300" cy="4.500" r="1.300" fill="#f5c36b"/></svg>
<svg class="a" style="left:111px;top:53.5px;" width="8" height="6" viewBox="0 0 8 6"><path d="M0.800 0.500 H6.600 L3.700 3.800Z" fill="#999"/></svg>
<svg class="a" style="left:123px;top:46.5px;" width="16" height="16" viewBox="0 0 16 16"><path d="M1.200 6.500 H6 L7.200 8 H13.500 V14.800 H1.200Z" fill="none" stroke="#dcb67a" stroke-width="1.100"/><path d="M3.200 10 H15 L13.200 14.800 H1.200Z" fill="#dcb67a"/><path d="M3.200 6.800 C3.200 3.600 5.500 2.500 8.500 3 M6.800 0.500 L9.600 3.200 L6.800 5.800" fill="none" stroke="#75beff" stroke-width="1.900"/></svg>
<svg class="a" style="left:147px;top:48.5px;" width="13" height="13" viewBox="0 0 13 13"><path d="M0.500 0.500 H10.500 L12.500 2.500 V12.500 H0.500Z" fill="#75beff"/><rect x="4.500" y="0.500" width="3.500" height="3.500" fill="#2d2d30"/></svg>
<svg class="a" style="left:168px;top:46.5px;" width="15" height="15" viewBox="0 0 15 15"><path d="M5.500 0.500 H13 L14.500 2 V9.500 H5.500Z" fill="#75beff"/><rect x="8.500" y="0.500" width="2.500" height="2.800" fill="#2d2d30"/><path d="M0.500 5.500 H8 L9.500 7 V14.500 H0.500Z" fill="#75beff" stroke="#2d2d30" stroke-width="1"/><rect x="3.500" y="5.500" width="2.500" height="2.800" fill="#2d2d30"/></svg>
<svg class="a" style="left:198px;top:46.5px;" width="15" height="16" viewBox="0 0 15 16"><path d="M1.800 1.200 V6.800 H7.400" fill="none" stroke="#75beff" stroke-width="2.200"/><path d="M2.600 6 C6 1.600 12.300 3 12.300 7.600 C12.300 10.500 9.500 12.300 5.600 14.600" fill="none" stroke="#75beff" stroke-width="2.200"/></svg>
<svg class="a" style="left:220px;top:53.5px;" width="8" height="6" viewBox="0 0 8 6"><path d="M0.800 0.500 H6.600 L3.700 3.800Z" fill="#999"/></svg>
<svg class="a" style="left:234px;top:46.5px;" width="15" height="16" viewBox="0 0 15 16"><path d="M13.200 1.200 V6.800 H7.600" fill="none" stroke="#525255" stroke-width="2.200"/><path d="M12.400 6 C9 1.600 2.700 3 2.700 7.600 C2.700 10.500 5.500 12.300 9.400 14.600" fill="none" stroke="#525255" stroke-width="2.200"/></svg>
<svg class="a" style="left:255px;top:53.5px;" width="8" height="6" viewBox="0 0 8 6"><path d="M0.800 0.500 H6.600 L3.700 3.800Z" fill="#5a5a5e"/></svg>
<svg class="a" style="left:330px;top:53.5px;" width="8" height="6" viewBox="0 0 8 6"><path d="M0.800 0.500 H6.600 L3.700 3.800Z" fill="#999"/></svg>
<svg class="a" style="left:446px;top:53.5px;" width="8" height="6" viewBox="0 0 8 6"><path d="M0.800 0.500 H6.600 L3.700 3.800Z" fill="#999"/></svg>
<svg class="a" style="left:467px;top:48.5px;" width="9" height="13" viewBox="0 0 9 13"><path d="M0.500 0.500 L8.500 6.500 L0.500 12.500Z" fill="#8ae28a"/></svg>
<svg class="a" style="left:569px;top:53.5px;" width="8" height="6" viewBox="0 0 8 6"><path d="M0.800 0.500 H6.600 L3.700 3.800Z" fill="#999"/></svg>
<svg class="a" style="left:589px;top:48px;" width="17" height="14" viewBox="0 0 17 14"><path d="M1 1 H6 L7.500 2.500 H13.500 V12.500 H1Z" fill="#dcb67a"/><circle cx="11" cy="8.500" r="2.300" fill="#2d2d30" stroke="#75beff" stroke-width="1.300"/><path d="M12.800 10.300 L15.500 13" stroke="#75beff" stroke-width="1.600"/></svg>
<svg class="a" style="left:619px;top:48px;" width="16" height="14" viewBox="0 0 16 14"><rect x="0.500" y="0.500" width="14" height="12" fill="none" stroke="#d8d8d8" stroke-width="1"/><path d="M3.500 7.500 L7.800 3.500 L12 7.500 M5 7 V11 H10.500 V7" fill="none" stroke="#75beff" stroke-width="1.200"/><path d="M10.500 2.500 H11.500 M12.500 2.500 H13.500" stroke="#d8d8d8" stroke-width="1"/></svg>
<svg class="a" style="left:641px;top:57px;" width="8" height="8" viewBox="0 0 8 8"><path d="M0.500 0.500 H7.500" stroke="#999" stroke-width="1"/><path d="M0.500 3 H7.500 L4 7Z" fill="#999"/></svg>
<svg class="a" style="left:663px;top:47px;" width="15" height="15" viewBox="0 0 15 15"><path d="M1 0.800 L5.300 9.300 L6 5.800 L9.300 5Z" fill="#75beff"/><rect x="2.500" y="6.500" width="11" height="7" fill="none" stroke="#d8d8d8" stroke-width="1"/><path d="M5 10.500 H11" stroke="#d8d8d8" stroke-width="1"/></svg>
<svg class="a" style="left:684px;top:47px;" width="16" height="16" viewBox="0 0 16 16"><path d="M4.500 2.500 H1.500 V10.500 H4.500 M3 0.800 L4.800 2.500 L3 4.200" fill="none" stroke="#75beff" stroke-width="1.200"/><path d="M6.500 1.500 H15 M6.500 1.500 V15 M9 4.500 H15 M9 7.500 H15 M9 10.500 H15 M9 13.500 H15" fill="none" stroke="#d8d8d8" stroke-width="1"/></svg>
<svg class="a" style="left:716px;top:49px;" width="12" height="12" viewBox="0 0 12 12"><path d="M1 1.500 H3 M5 1.500 H11 M4.500 7.500 H11 M2.500 9.500 H11" stroke="#d8d8d8" stroke-width="1"/><path d="M4.500 3.500 H11 M4.500 5.500 H11" stroke="#8ae28a" stroke-width="1"/></svg>
<svg class="a" style="left:737px;top:48px;" width="15" height="14" viewBox="0 0 15 14"><path d="M1.200 2.500 C4 0.300 7.500 2 6.300 5 L4.800 7.500" fill="none" stroke="#75beff" stroke-width="1.500"/><path d="M0.500 0.500 V4 H4Z" fill="#75beff"/><path d="M9 3.500 H13.500 M9 5.500 H13.500 M7.500 7.500 H13.500 M7.500 9.500 H13.500 M4.500 11.500 H13.500" stroke="#d8d8d8" stroke-width="1"/></svg>
<svg class="a" style="left:768px;top:48px;" width="12" height="14" viewBox="0 0 12 14"><path d="M0.500 0.500 H11.500 V13 L6 9.500 L0.500 13Z" fill="#c8c8c8"/></svg>
<svg class="a" style="left:789px;top:48px;" width="14" height="14" viewBox="0 0 14 14"><path d="M6.500 2 H13 V13 L9.800 10.500 L6.500 13 V6" fill="#4a4a4d"/><path d="M7 3.500 H1.500 M3.500 1.500 L1.500 3.500 L3.500 5.500" fill="none" stroke="#4a4a4d" stroke-width="1.300"/></svg>
<svg class="a" style="left:810px;top:48px;" width="15" height="14" viewBox="0 0 15 14"><path d="M8 2 H14.500 V13 L11.300 10.500 L8 13 V6" fill="#4a4a4d"/><path d="M1 3.500 H7 M5 1.500 L7 3.500 L5 5.500" fill="none" stroke="#4a4a4d" stroke-width="1.300"/></svg>
<svg class="a" style="left:831px;top:46px;" width="8" height="19" viewBox="0 0 8 19"><path d="M0.500 0.500 L2.500 2 L0.500 3.500Z M4.500 0.500 L6.500 2 L4.500 3.500Z" fill="#999"/><path d="M0.500 12.500 H7.500" stroke="#999" stroke-width="1"/><path d="M0.500 15 H7.500 L4 18.500Z" fill="#999"/></svg>
<svg class="a" style="left:861px;top:47px;" width="16" height="16" viewBox="0 0 16 16"><circle cx="6" cy="8" r="2.600" fill="none" stroke="#d8d8d8" stroke-width="1.200"/><path d="M1 15.500 C1.500 12 4 11 6 11 C8 11 10.500 12 11 15.500" fill="none" stroke="#d8d8d8" stroke-width="1.200"/><path d="M6.500 4 V1 H15 V6.500 H12 L10 8.500 V6.500" fill="none" stroke="#d8d8d8" stroke-width="1.100"/></svg>
<div class="a" style="left:897px;top:0px;width:1023px;height:977px;background:#ffffff;"></div>
<div class="a" style="left:897px;top:0px;width:1023px;height:1px;background:#8c8c8c;"></div>
<div class="a" style="left:897px;top:24px;width:1023px;height:7px;background:linear-gradient(#fff,#e9e9e9)"></div>
<div class="a" style="left:897px;top:31px;width:1023px;height:1px;background:#9b9b9b;"></div>
<div class="a t" style="left:927.2px;top:8.00px;font:12px/16px 'Liberation Sans',sans-serif;color:#8f8f8f;letter-spacing:-0.316px;">OGAS_GML - GameMaker Studio 2</div>
<div class="a" style="left:897px;top:32px;width:1023px;height:42px;background:#e7eaed;"></div>
<div class="a" style="left:1423px;top:40px;width:182px;height:34px;background:#fff;border-radius:8px 8px 0 0"></div>
<div class="a" style="left:1415px;top:66px;width:8px;height:8px;background:radial-gradient(circle at 0 0,#e7eaed 7.5px,#fff 8.5px)"></div>
<div class="a" style="left:1605px;top:66px;width:8px;height:8px;background:radial-gradient(circle at 100% 0,#e7eaed 7.5px,#fff 8.5px)"></div>
<div class="a t" style="left:916.4px;top:49.00px;font:12px/16px 'Liberation Sans',sans-serif;color:#50555a;letter-spacing:0.121px;">unity3d - Match Canva</div>
<div class="a" style="left:1013px;top:44px;width:24px;height:24px;background:linear-gradient(90deg,rgba(231,234,237,0),#e7eaed)"></div>
<div class="a" style="left:1037px;top:44px;width:4px;height:24px;background:#e7eaed;"></div>
<div class="a t" style="left:1097px;top:49.00px;font:12px/16px 'Liberation Sans',sans-serif;color:#50555a;letter-spacing:0.014px;">How do i move a game</div>
<div class="a" style="left:1193px;top:44px;width:24px;height:24px;background:linear-gradient(90deg,rgba(231,234,237,0),#e7eaed)"></div>
<div class="a" style="left:1217px;top:44px;width:4px;height:24px;background:#e7eaed;"></div>
<div class="a t" style="left:1278px;top:49.00px;font:12px/16px 'Liberation Sans',sans-serif;color:#50555a;letter-spacing:0.009px;">TorontoGameJam - Twi</div>
<div class="a" style="left:1376px;top:44px;width:24px;height:24px;background:linear-gradient(90deg,rgba(231,234,237,0),#e7eaed)"></div>
<div class="a" style="left:1400px;top:44px;width:3px;height:24px;background:#e7eaed;"></div>
<div class="a t" style="left:1459.4px;top:49.00px;font:12px/16px 'Liberation Sans',sans-serif;color:#474b4f;letter-spacing:-0.027px;">Methods - C# Guide | </div>
<div class="a t" style="left:1640.2px;top:49.00px;font:12px/16px 'Liberation Sans',sans-serif;color:#50555a;letter-spacing:-0.218px;">(1) Back To The 80's | B</div>
<div class="a" style="left:1736px;top:44px;width:24px;height:24px;background:linear-gradient(90deg,rgba(231,234,237,0),#e7eaed)"></div>
<div class="a" style="left:1760px;top:44px;width:3px;height:24px;background:#e7eaed;"></div>
<div class="a t" style="left:1820px;top:49.00px;font:12px/16px 'Liberation Sans',sans-serif;color:#50555a;letter-spacing:-0.403px;">Recording - Google D</div>
<div class="a" style="left:1061px;top:47px;width:1px;height:20px;background:#80868b;"></div>
<div class="a" style="left:1242px;top:47px;width:1px;height:20px;background:#80868b;"></div>
<div class="a" style="left:1784px;top:47px;width:1px;height:20px;background:#80868b;"></div>
<div class="a" style="left:897px;top:74px;width:1023px;height:4px;background:#ffffff;"></div>
<div class="a" style="left:897px;top:78px;width:1023px;height:28px;background:#f1f3f4;"></div>
<div class="a t" style="left:897.6px;top:84.00px;font:13.6px/17px 'Liberation Sans',sans-serif;color:#5f6368;letter-spacing:0.433px;">p/methods</div>
<div class="a" style="left:897px;top:106px;width:1023px;height:36px;background:#ffffff;"></div>
<div class="a" style="left:897px;top:142px;width:1023px;height:1px;background:#dcdee1;"></div>
<div class="a t" style="left:918.2px;top:116.00px;font:12px/16px 'Liberation Sans',sans-serif;color:#3c4043;letter-spacing:-0.661px;">CGSA/ACÉV 2021</div>
<div class="a t" style="left:1050px;top:116.00px;font:12px/16px 'Liberation Sans',sans-serif;color:#3c4043;letter-spacing:-0.110px;">Stack Overflow - W...</div>
<div class="a t" style="left:1200px;top:116.00px;font:12px/16px 'Liberation Sans',sans-serif;color:#3c4043;letter-spacing:-0.145px;">Your Dashboard | o...</div>
<div class="a t" style="left:1349.7px;top:116.00px;font:12px/16px 'Liberation Sans',sans-serif;color:#3c4043;letter-spacing:-0.136px;">Comprehensive An...</div>
<div class="a t" style="left:1499px;top:116.00px;font:12px/16px 'Liberation Sans',sans-serif;color:#3c4043;letter-spacing:-0.545px;">CAPREIT | Resident...</div>
<div class="a t" style="left:1648.2px;top:116.00px;font:12px/16px 'Liberation Sans',sans-serif;color:#3c4043;letter-spacing:-0.187px;">csinn/CSharp-From...</div>
<div class="a t" style="left:1799.2px;top:116.00px;font:12px/16px 'Liberation Sans',sans-serif;color:#3c4043;letter-spacing:-0.172px;">Learn game develo...</div>
<div class="a" style="left:898px;top:167px;width:115px;height:31px;background:#ffffff;border:1px solid #dcdcdc;border-left:none;border-radius:0 2px 2px 0"></div>
<div class="a" style="left:996px;top:207px;width:17px;height:707px;background:#f1f1f1;"></div>
<div class="a" style="left:998px;top:224px;width:13px;height:516px;background:#c1c1c1;"></div>
<div class="a" style="left:898px;top:609px;width:98px;height:29px;background:#f2f2f2;"></div>
<div class="a" style="left:898px;top:922px;width:115px;height:1px;background:#e0e0e0;"></div>
<div class="a" style="left:898px;top:952px;width:115px;height:1px;background:#e0e0e0;"></div>
<div class="a t" style="left:898.5px;top:416.00px;font:14px/18px 'Liberation Sans',sans-serif;color:#505050;letter-spacing:-0.286px;">able reference</div>
<div class="a t" style="left:898.5px;top:557.00px;font:14px/18px 'Liberation Sans',sans-serif;color:#505050;letter-spacing:-1.357px;">pes</div>
<div class="a" style="left:1061px;top:143px;width:870px;height:247px;background:#fafafa;border:1px solid #e3e3e3;border-top:none"></div>
<div class="a" style="left:1061px;top:524px;width:870px;height:32px;background:#f2f2f2;border:1px solid #e3e3e3;"></div>
<div class="a" style="left:1061px;top:555px;width:870px;height:440px;background:#fafafa;border:1px solid #e3e3e3;"></div>
<div class="a t" style="left:1078px;top:532.00px;font:12px/16px 'Liberation Sans',sans-serif;color:#171717;letter-spacing:-0.170px;">C#</div>
<div class="a t" style="left:1078.10px;top:140.00px;font:13.2px/17px 'Liberation Mono',monospace;letter-spacing:-0.224px;color:#171717"><span style="color:#0101fd">public class</span> <span style="color:#007d9a">Example</span></div>
<div class="a t" style="left:1078.10px;top:158.00px;font:13.2px/17px 'Liberation Mono',monospace;letter-spacing:-0.224px;color:#171717">{</div>
<div class="a t" style="left:1101.19px;top:176.00px;font:13.2px/17px 'Liberation Mono',monospace;letter-spacing:-0.224px;color:#171717"><span style="color:#0101fd">public static void</span> <span style="color:#007d9a">Main</span>()</div>
<div class="a t" style="left:1101.19px;top:194.00px;font:13.2px/17px 'Liberation Mono',monospace;letter-spacing:-0.224px;color:#171717">{</div>
<div class="a t" style="left:1124.28px;top:212.00px;font:13.2px/17px 'Liberation Mono',monospace;letter-spacing:-0.224px;color:#171717"><span style="color:#0101fd">var</span> p1 = <span style="color:#0101fd">new</span> Person();</div>
<div class="a t" style="left:1124.28px;top:230.00px;font:13.2px/17px 'Liberation Mono',monospace;letter-spacing:-0.224px;color:#171717">p1.FirstName = <span style="color:#a31515">"John"</span>;</div>
<div class="a t" style="left:1124.28px;top:248.00px;font:13.2px/17px 'Liberation Mono',monospace;letter-spacing:-0.224px;color:#171717"><span style="color:#0101fd">var</span> p2 = <span style="color:#0101fd">new</span> Person();</div>
<div class="a t" style="left:1124.28px;top:266.00px;font:13.2px/17px 'Liberation Mono',monospace;letter-spacing:-0.224px;color:#171717">p2.FirstName = <span style="color:#a31515">"John"</span>;</div>
<div class="a t" style="left:1124.28px;top:284.00px;font:13.2px/17px 'Liberation Mono',monospace;letter-spacing:-0.224px;color:#171717">Console.WriteLine(<span style="color:#a31515">"p1 = p2: {0}"</span>, p1.Equals(p2));</div>
<div class="a t" style="left:1101.19px;top:302.00px;font:13.2px/17px 'Liberation Mono',monospace;letter-spacing:-0.224px;color:#171717">}</div>
<div class="a t" style="left:1078.10px;top:320.00px;font:13.2px/17px 'Liberation Mono',monospace;letter-spacing:-0.224px;color:#171717">}</div>
<div class="a t" style="left:1078.10px;top:338.00px;font:13.2px/17px 'Liberation Mono',monospace;letter-spacing:-0.224px;color:#171717"><span style="color:#008000">// The example displays the following output:</span></div>
<div class="a t" style="left:1078.10px;top:356.00px;font:13.2px/17px 'Liberation Mono',monospace;letter-spacing:-0.224px;color:#171717"><span style="color:#008000">//      p1 = p2: False</span></div>
<div class="a t" style="left:1078.10px;top:573.00px;font:13.2px/17px 'Liberation Mono',monospace;letter-spacing:-0.224px;color:#171717"><span style="color:#0101fd">using</span> System;</div>
<div class="a t" style="left:1078.10px;top:609.00px;font:13.2px/17px 'Liberation Mono',monospace;letter-spacing:-0.224px;color:#171717"><span style="color:#0101fd">public class</span> <span style="color:#007d9a">Person</span></div>
<div class="a t" style="left:1078.10px;top:627.00px;font:13.2px/17px 'Liberation Mono',monospace;letter-spacing:-0.224px;color:#171717">{</div>
<div class="a t" style="left:1101.19px;top:645.00px;font:13.2px/17px 'Liberation Mono',monospace;letter-spacing:-0.224px;color:#171717"><span style="color:#0101fd">public</span> String FirstName;</div>
<div class="a t" style="left:1101.19px;top:681.00px;font:13.2px/17px 'Liberation Mono',monospace;letter-spacing:-0.224px;color:#171717"><span style="color:#0101fd">public override bool</span> <span style="color:#007d9a">Equals</span>(<span style="color:#0101fd">object</span> obj)</div>
<div class="a t" style="left:1101.19px;top:699.00px;font:13.2px/17px 'Liberation Mono',monospace;letter-spacing:-0.224px;color:#171717">{</div>
<div class="a t" style="left:1124.28px;top:717.00px;font:13.2px/17px 'Liberation Mono',monospace;letter-spacing:-0.224px;color:#171717"><span style="color:#0101fd">var</span> p2 = obj <span style="color:#0101fd">as</span> Person;</div>
<div class="a t" style="left:1124.28px;top:735.00px;font:13.2px/17px 'Liberation Mono',monospace;letter-spacing:-0.224px;color:#171717"><span style="color:#0101fd">if</span> (p2 == <span style="color:#07704a">null</span>)</div>
<div class="a t" style="left:1147.37px;top:753.00px;font:13.2px/17px 'Liberation Mono',monospace;letter-spacing:-0.224px;color:#171717"><span style="color:#0101fd">return</span> <span style="color:#07704a">false</span>;</div>
<div class="a t" style="left:1124.28px;top:771.00px;font:13.2px/17px 'Liberation Mono',monospace;letter-spacing:-0.224px;color:#171717"><span style="color:#0101fd">else</span></div>
<div class="a t" style="left:1147.37px;top:789.00px;font:13.2px/17px 'Liberation Mono',monospace;letter-spacing:-0.224px;color:#171717"><span style="color:#0101fd">return</span> FirstName.Equals(p2.FirstName);</div>
<div class="a t" style="left:1101.19px;top:807.00px;font:13.2px/17px 'Liberation Mono',monospace;letter-spacing:-0.224px;color:#171717">}</div>
<div class="a t" style="left:1101.19px;top:843.00px;font:13.2px/17px 'Liberation Mono',monospace;letter-spacing:-0.224px;color:#171717"><span style="color:#0101fd">public override int</span> <span style="color:#007d9a">GetHashCode</span>()</div>
<div class="a t" style="left:1101.19px;top:861.00px;font:13.2px/17px 'Liberation Mono',monospace;letter-spacing:-0.224px;color:#171717">{</div>
<div class="a t" style="left:1124.28px;top:879.00px;font:13.2px/17px 'Liberation Mono',monospace;letter-spacing:-0.224px;color:#171717"><span style="color:#0101fd">return</span> FirstName.GetHashCode();</div>
<div class="a t" style="left:1101.19px;top:897.00px;font:13.2px/17px 'Liberation Mono',monospace;letter-spacing:-0.224px;color:#171717">}</div>
<div class="a t" style="left:1078.10px;top:915.00px;font:13.2px/17px 'Liberation Mono',monospace;letter-spacing:-0.224px;color:#171717">}</div>
<div class="a t" style="left:1078.10px;top:951.00px;font:13.2px/17px 'Liberation Mono',monospace;letter-spacing:-0.224px;color:#171717"><span style="color:#0101fd">public class</span> <span style="color:#007d9a">Example</span></div>
<div class="a t" style="left:1078.10px;top:969.00px;font:13.2px/17px 'Liberation Mono',monospace;letter-spacing:-0.224px;color:#171717">{</div>
<div class="a t" style="left:1061.3px;top:409.00px;font:15px/19px 'Liberation Sans',sans-serif;color:#171717;letter-spacing:0.398px;">Types can override inherited members by using the</div>
<div class="a" style="left:1425px;top:410px;width:66px;height:18.8px;background:#e6e6e6;border-radius:2px"></div>
<div class="a t" style="left:1428.5px;top:412.00px;font:13.2px/17px 'Liberation Mono',monospace;color:#171717;letter-spacing:-0.484px;">override</div>
<div class="a t" style="left:1495.5px;top:409.00px;font:15px/19px 'Liberation Sans',sans-serif;color:#171717;letter-spacing:0.689px;">keyword and providing an implementation for the overridden</div>
<div class="a t" style="left:1061.3px;top:436.00px;font:15px/19px 'Liberation Sans',sans-serif;color:#171717;letter-spacing:0.401px;">The method signature must be the same as that of the overridden method. The following example is like the previous one, e</div>
<div class="a t" style="left:1061.3px;top:462.00px;font:15px/19px 'Liberation Sans',sans-serif;color:#171717;letter-spacing:0.483px;">that it overrides the</div>
<div class="a t" style="left:1203.5px;top:462.00px;font:15px/19px 'Liberation Sans',sans-serif;color:#0065b3;letter-spacing:0.164px;">Equals(Object)</div>
<div class="a t" style="left:1309.5px;top:462.00px;font:15px/19px 'Liberation Sans',sans-serif;color:#171717;letter-spacing:0.408px;">method. (It also overrides the</div>
<div class="a t" style="left:1520.5px;top:462.00px;font:15px/19px 'Liberation Sans',sans-serif;color:#0065b3;letter-spacing:0.112px;">GetHashCode()</div>
<div class="a t" style="left:1631.5px;top:462.00px;font:15px/19px 'Liberation Sans',sans-serif;color:#171717;letter-spacing:0.525px;">method, since the two methods are intend</div>
<div class="a t" style="left:1061.3px;top:487.00px;font:15px/19px 'Liberation Sans',sans-serif;color:#171717;letter-spacing:0.296px;">provide consistent results.)</div>
<div class="a" style="left:897px;top:0px;width:1.3px;height:1040px;background:#1883d7;"></div>
<div class="a" style="left:898.300px;top:1px;width:5px;height:976px;background:linear-gradient(90deg,#c4dff5,rgba(255,255,255,0))"></div>
<svg class="a" style="left:906px;top:7px;" width="16" height="16" viewBox="0 0 16 16"><rect x="0.600" y="0.600" width="14.800" height="14.800" fill="#05080c" stroke="#19e0e0" stroke-width="1.200"/><path d="M8.300 8.200 H12.800 L8 3.400 L3.200 8.200 L8 13 L9.500 11.500" fill="none" stroke="#fff" stroke-width="2.200" stroke-linejoin="miter"/></svg>
<div class="a" style="left:1800px;top:15px;width:10px;height:1px;background:#8a8a8a;"></div>
<div class="a" style="left:1845px;top:10px;width:10px;height:10px;background:transparent;border:1px solid #8a8a8a;"></div>
<svg class="a" style="left:1890px;top:9px;" width="12" height="12" viewBox="0 0 12 12"><path d="M1 1 L11 11 M11 1 L1 11" stroke="#8a8a8a" stroke-width="1"/></svg>
<svg class="a" style="left:1041.5px;top:52px;" width="10" height="10" viewBox="0 0 10 10"><path d="M1 1 L9 9 M9 1 L1 9" stroke="#45494d" stroke-width="1.500"/></svg>
<svg class="a" style="left:1222px;top:52px;" width="10" height="10" viewBox="0 0 10 10"><path d="M1 1 L9 9 M9 1 L1 9" stroke="#45494d" stroke-width="1.500"/></svg>
<svg class="a" style="left:1403.5px;top:52px;" width="10" height="10" viewBox="0 0 10 10"><path d="M1 1 L9 9 M9 1 L1 9" stroke="#45494d" stroke-width="1.500"/></svg>
<svg class="a" style="left:1584px;top:52px;" width="10" height="10" viewBox="0 0 10 10"><path d="M1 1 L9 9 M9 1 L1 9" stroke="#45494d" stroke-width="1.500"/></svg>
<svg class="a" style="left:1764.5px;top:52px;" width="10" height="10" viewBox="0 0 10 10"><path d="M1 1 L9 9 M9 1 L1 9" stroke="#45494d" stroke-width="1.500"/></svg>
<svg class="a" style="left:898px;top:50px;" width="14" height="16" viewBox="0 0 14 16"><g opacity="0.550"><path d="M0 13.500 H5.500 V9.500" fill="none" stroke="#bcbbbb" stroke-width="1.300"/><path d="M-1 11 H4 M-0.500 8 L4 9 M0.500 5 L4.500 7 M2.500 2 L5.500 5.500" stroke="#f48024" stroke-width="1.300"/></g></svg>
<svg class="a" style="left:1073.5px;top:49px;" width="15" height="15" viewBox="0 0 15 15"><g fill="none" stroke="#6e7276" stroke-width="1.400" stroke-linejoin="round"><path d="M1.500 7.500 L12 1.500 V13.500Z"/><path d="M1.500 7.500 H8 M12 1.500 L8 7.500 L12 13.500"/></g></svg>
<svg class="a" style="left:1255px;top:49px;" width="15" height="16" viewBox="0 0 15 16"><path d="M2.500 0.500 H14.500 V9 L10.500 13 H7.500 L5 15.500 V13 H1 V3.500Z" fill="#b48cf2"/><path d="M4.500 2.500 H12.500 V8.500 L10.500 10.500 H7.500 L5.500 12.500 V10.500 H4.500Z" fill="#fff"/><path d="M8 4.500 V7.500 M11 4.500 V7.500" stroke="#b48cf2" stroke-width="1.300"/></svg>
<svg class="a" style="left:1435px;top:49px;" width="15" height="15" viewBox="0 0 15 15"><rect width="7" height="7" fill="#f25022"/><rect x="8" width="7" height="7" fill="#7fba00"/><rect y="8" width="7" height="7" fill="#00a4ef"/><rect x="8" y="8" width="7" height="7" fill="#ffb900"/></svg>
<svg class="a" style="left:1616.5px;top:51px;" width="15" height="12" viewBox="0 0 15 12"><rect width="15" height="11.500" rx="3" fill="#f00"/><path d="M6 3.300 L10 5.750 L6 8.200Z" fill="#fff"/></svg>
<svg class="a" style="left:1797px;top:50px;" width="15" height="14" viewBox="0 0 15 14"><path d="M5 0.500 H10 L15 9 H10Z" fill="#f8c84a"/><path d="M5 0.500 L0 9 L2.500 13.500 L7.500 5Z" fill="#4caf6e"/><path d="M2.500 13.500 H12.500 L15 9 H5Z" fill="#6d9ee8"/><path d="M10 9 H15 L12.500 13.500Z" fill="#e06055"/></svg>
<svg class="a" style="left:898px;top:116px;" width="12" height="16" viewBox="0 0 12 16"><rect x="-4" width="16" height="16" fill="#3f51b5"/><path d="M-2 4.500 H8.500 M-2 8.500 H2 V12 M5 8.500 H8.500 V12 H5Z" fill="none" stroke="#fff" stroke-width="1.800"/></svg>
<svg class="a" style="left:1027px;top:116px;" width="14" height="16" viewBox="0 0 14 16"><path d="M1.500 10.500 V14.500 H11.500 V10.500" fill="none" stroke="#bcbbbb" stroke-width="1.200"/><path d="M3.500 12.500 H9.500 M3.600 9.800 L9.500 10.600 M4.200 7 L9.800 9 M5.800 4 L10.500 7.300 M8.500 1.500 L11.800 6" stroke="#f48024" stroke-width="1.300"/></svg>
<svg class="a" style="left:1176px;top:116px;" width="17" height="16" viewBox="0 0 17 16"><ellipse cx="8.500" cy="8" rx="8" ry="7.800" fill="#000"/><circle cx="5.300" cy="8.500" r="2.700" fill="none" stroke="#fff" stroke-width="1.500"/><circle cx="11.700" cy="8.500" r="2.700" fill="none" stroke="#fff" stroke-width="1.500"/><rect x="12.500" y="7.300" width="3" height="2.400" fill="#000"/></svg>
<svg class="a" style="left:1326px;top:116px;" width="16" height="16" viewBox="0 0 16 16"><rect width="16" height="16" fill="#000"/><circle cx="8" cy="8" r="4.200" fill="#0dc5f2"/></svg>
<svg class="a" style="left:1475px;top:116px;" width="16" height="16" viewBox="0 0 16 16"><circle cx="8" cy="8" r="8" fill="#c9a815"/><path d="M6.500 3 H9.500 V10 H6.500Z" fill="#8d7410"/><path d="M4.500 12 H11.500" stroke="#e8d77a" stroke-width="1"/></svg>
<svg class="a" style="left:1624px;top:116px;" width="16" height="16" viewBox="0 0 16 16"><path d="M8 0.300 C3.600 0.300 0.200 3.800 0.200 8.200 C0.200 11.700 2.400 14.600 5.500 15.700 C5.900 15.800 6 15.500 6 15.300 V13.900 C3.800 14.400 3.400 12.900 3.400 12.900 C3 12 2.500 11.700 2.500 11.700 C1.800 11.200 2.600 11.200 2.600 11.200 C3.400 11.300 3.800 12 3.800 12 C4.500 13.200 5.600 12.900 6.100 12.700 C6.100 12.200 6.300 11.800 6.600 11.600 C4.800 11.400 3 10.700 3 7.700 C3 6.800 3.300 6.100 3.800 5.600 C3.700 5.400 3.500 4.600 3.900 3.500 C3.900 3.500 4.600 3.300 6 4.300 C6.700 4.100 7.300 4 8 4 C8.700 4 9.300 4.100 10 4.300 C11.500 3.300 12.100 3.500 12.100 3.500 C12.500 4.600 12.300 5.400 12.200 5.600 C12.700 6.100 13 6.800 13 7.700 C13 10.700 11.200 11.400 9.400 11.600 C9.700 11.900 10 12.400 10 13.100 V15.300 C10 15.500 10.100 15.800 10.500 15.700 C13.600 14.600 15.800 11.700 15.800 8.200 C15.800 3.800 12.400 0.300 8 0.300Z" fill="#191717"/></svg>
<svg class="a" style="left:1775px;top:116px;" width="16" height="16" viewBox="0 0 16 16"><rect width="16" height="16" fill="#0b2135"/><g fill="none" stroke="#fff" stroke-width="1.200" stroke-linejoin="round"><path d="M3 8 L11.500 3.200 V12.800Z"/><path d="M3 8 H8.300 M11.500 3.200 L8.300 8 L11.500 12.800"/></g></svg>
<svg class="a" style="left:1000px;top:212px;" width="9" height="6" viewBox="0 0 9 6"><path d="M4.500 0.500 L8.500 5.500 H0.500Z" fill="#a3a3a3"/></svg>
<svg class="a" style="left:1000px;top:902px;" width="9" height="6" viewBox="0 0 9 6"><path d="M4.500 5.500 L8.500 0.500 H0.500Z" fill="#505050"/></svg>
<div class="a" style="left:897px;top:977px;width:1023px;height:63px;overflow:hidden"><div class="a" style="left:-897px;top:-977px;width:1920px;height:1080px">
<div class="a" style="left:897px;top:977px;width:1023px;height:63px;background:#272727;"></div>
<div class="a" style="left:897px;top:977px;width:9px;height:61px;background:linear-gradient(90deg,#16324c,#1e2a34 40%,#272727)"></div>
<div class="a" style="left:915px;top:960px;width:179px;height:61px;background:#212121;border:1px solid #131313;border-radius:3px"></div>
<div class="a" style="left:897px;top:1022px;width:197px;height:1px;background:#131313;"></div>
<div class="a" style="left:1101px;top:1022px;width:691px;height:1px;background:#131313;"></div>
<div class="a" style="left:1799px;top:1022px;width:104px;height:1px;background:#131313;"></div>
<div class="a" style="left:1094px;top:977px;width:1px;height:61px;background:#131313;"></div>
<div class="a" style="left:1095px;top:977px;width:5px;height:61px;background:#292929;"></div>
<div class="a" style="left:1100px;top:977px;width:1px;height:61px;background:#3c3c3c;"></div>
<div class="a" style="left:1106px;top:960px;width:681px;height:62px;background:#212121;border:1px solid #131313;"></div>
<div class="a" style="left:1792px;top:977px;width:1px;height:61px;background:#3c3c3c;"></div>
<div class="a" style="left:1793px;top:977px;width:5px;height:61px;background:#2c2c2c;"></div>
<div class="a" style="left:1798px;top:977px;width:1px;height:61px;background:#131313;"></div>
<div class="a" style="left:1799px;top:960px;width:104px;height:62px;background:#242424;border:1px solid #131313;"></div>
<div class="a" style="left:1801px;top:977px;width:87px;height:31px;background:#222222;"></div>
<div class="a" style="left:1803.5px;top:977px;width:84px;height:22.6px;background:#2d2d2d;"></div>
<div class="a" style="left:1888.5px;top:977px;width:11px;height:31px;background:#2b2b2b;"></div>
<div class="a" style="left:1889px;top:977px;width:10.500px;height:16px;background:linear-gradient(#606060,#444)"></div>
<div class="a" style="left:1801px;top:1008px;width:87px;height:12.5px;background:#262626;"></div>
<div class="a" style="left:1811px;top:1009px;width:27px;height:10.500px;background:linear-gradient(#5c5c5c,#424242)"></div>
<div class="a" style="left:1888px;top:1008px;width:13.3px;height:12.5px;background:#000000;"></div>
<div class="a" style="left:1902px;top:1022px;width:1px;height:16px;background:#131313;"></div>
<div class="a" style="left:1918px;top:977px;width:2px;height:61px;background:#1e1e1e;"></div>
<div class="a" style="left:897px;top:1037.500px;width:1023px;height:2.500px;background:linear-gradient(#333,#3e3e3e)"></div>
<div class="a t" style="left:939.2px;top:974.00px;font:12.5px/16px 'Liberation Sans',sans-serif;color:#e6e6e6;letter-spacing:-0.051px;">Viewports and Cameras</div>
<div class="a t" style="left:939.2px;top:990.00px;font:12.5px/16px 'Liberation Sans',sans-serif;color:#e6e6e6;letter-spacing:-0.407px;">Room Physics</div>
<div class="a t" style="left:1833.3px;top:981.00px;font:12.5px/16px 'Liberation Sans',sans-serif;color:#e6e6e6;letter-spacing:-0.178px;">obj_resea</div>
<svg class="a" style="left:925px;top:977px;" width="6" height="26" viewBox="0 0 6 26"><path d="M0 0.500 L4.500 5 L0 9.500Z M0 16.500 L4.500 21 L0 25.500Z" fill="#8a8a8a"/></svg>
<svg class="a" style="left:1806px;top:977px;" width="22" height="31" viewBox="0 0 22 31"><g fill="none" stroke="#f4f4f4"><path d="M3.500 3 V21" stroke-width="2.400" stroke-linecap="round"/><path d="M4 5.800 C8 3.800 9.500 5 12 7 C14 8.500 17 8.500 19.200 8 V17.500 C16 18.500 14 17.500 12 16 C9.500 14 8 14 4 15.500" stroke-width="1.500"/><path d="M3.500 25.500 V32" stroke-width="2.400" stroke-linecap="round"/><path d="M4 27.500 C8 25.500 9.500 26.700 12 28.700 C14 30 17 30.200 19.200 29.700" stroke-width="1.500"/></g></svg>
<svg class="a" style="left:1838px;top:1004px;" width="50" height="4" viewBox="0 0 50 4"><g fill="#e6e6e6"><rect x="1" y="2" width="1.200" height="2"/><rect x="8" y="2.500" width="1" height="1.500"/><rect x="18" y="2.500" width="5" height="1"/><rect x="45" y="2" width="1.200" height="2"/></g></svg>
<svg class="a" style="left:1888px;top:999px;" width="13" height="8" viewBox="0 0 13 8"><path d="M2 2 H10.500 L6.200 7Z" fill="#555"/></svg>
<svg class="a" style="left:1801px;top:1009px;" width="8" height="11" viewBox="0 0 8 11"><path d="M6 0.500 V10 L1 5.200Z" fill="#555"/></svg>
<svg class="a" style="left:1880px;top:1009px;" width="8" height="11" viewBox="0 0 8 11"><path d="M1.500 0.500 V10 L6.500 5.200Z" fill="#555"/></svg>
<svg class="a" style="left:1440px;top:1024px;" width="10" height="11" viewBox="0 0 10 11"><path d="M1 1 L5 4.500 L9 1 M1 5.500 L5 9 L9 5.500" fill="none" stroke="#b0b0b0" stroke-width="1.100"/></svg>
</div></div>
<div class="a" style="left:0px;top:1040px;width:1920px;height:40px;background:#2a2420;"></div>
<div class="a" style="left:48px;top:1040px;width:344px;height:40px;background:#f2f2f2;"></div>
<div class="a" style="left:48px;top:1079px;width:344px;height:1px;background:#bdbdbd;"></div>
<div class="a t" style="left:88px;top:1051.00px;font:15px/19px 'Liberation Sans',sans-serif;color:#2b2b2b;letter-spacing:-0.671px;">Search</div>
<svg class="a" style="left:16px;top:1052px;" width="16" height="16" viewBox="0 0 16 16"><path d="M0 2.3 L6.6 1.4 V7.6 H0Z M7.5 1.25 L16 0 V7.6 H7.5Z M0 8.4 H6.6 V14.6 L0 13.7Z M7.5 8.4 H16 V16 L7.5 14.75Z" fill="#fff"/></svg>
<svg class="a" style="left:58px;top:1050px;" width="20" height="20" viewBox="0 0 20 20"><circle cx="12" cy="8" r="5.2" fill="none" stroke="#222" stroke-width="1.3"/><path d="M8.3 11.7 L2 18" stroke="#222" stroke-width="1.4"/></svg>
<svg class="a" style="left:406px;top:1050px;" width="20" height="20" viewBox="0 0 20 20"><circle cx="10" cy="10" r="6.8" fill="none" stroke="#fff" stroke-width="2"/></svg>
<svg class="a" style="left:454px;top:1051px;" width="20" height="18" viewBox="0 0 20 18"><g fill="none" stroke="#fff" stroke-width="1.3"><rect x="2.6" y="4.6" width="9.8" height="8.8"/><path d="M1 0.7 H4 M11 0.7 H14 M1 17.3 H4 M11 17.3 H14 M2.5 0.7 V2 M12.5 0.7 V2 M2.5 16 V17.3 M12.5 16 V17.3"/><path d="M16.5 0 V3.5 M16.5 6 V18" stroke-width="1.6"/></g></svg>
<svg class="a" style="left:503px;top:1048px;" width="24" height="24" viewBox="0 0 24 24"><path d="M1 3.5 H8.5 L10.5 5.5 H23 V20 H1Z" fill="#f7b92c"/><path d="M1 7 H23 V20 H1Z" fill="#fcd464"/><path d="M6 14 H18 V20 H6Z" fill="#3a94de"/><path d="M9.5 17 H14.5 V20 H9.5Z" fill="#fcd464"/></svg>
<svg class="a" style="left:552px;top:1048px;" width="24" height="24" viewBox="0 0 24 24"><ellipse cx="11.5" cy="10.5" rx="10.5" ry="7" transform="rotate(-18 11.5 10.5)" fill="#f3f3f3" stroke="#d85a55" stroke-width="1.6"/><path d="M11 6 L17 19 M16 7 L12.5 18.5" stroke="#8aa8c8" stroke-width="1.3"/><circle cx="18.5" cy="20.5" r="2.2" fill="none" stroke="#2a8fd8" stroke-width="1.5"/><circle cx="13" cy="21" r="2.2" fill="none" stroke="#2a8fd8" stroke-width="1.5"/></svg>
<svg class="a" style="left:601px;top:1048px;" width="24" height="24" viewBox="0 0 24 24"><path d="M2 0.5 H22 V18.5 L12 23.5 L2 18.5Z" fill="#0e0e0e"/><text x="12" y="11.5" font-family="Liberation Sans,sans-serif" font-weight="700" font-size="10.5" fill="#fff" text-anchor="middle" textLength="17" lengthAdjust="spacingAndGlyphs">EPIC</text><text x="12" y="16.5" font-family="Liberation Sans,sans-serif" font-weight="700" font-size="3.6" fill="#fff" text-anchor="middle">GAMES</text></svg>
<svg class="a" style="left:650px;top:1048px;" width="24" height="24" viewBox="0 0 24 24"><circle cx="12" cy="12" r="11.5" fill="#f4363f"/><path d="M5 15.5 L7.2 12 H12 L12.8 10.8 H8 L8.8 9.5 H14.5 L10.7 15.5Z M15.6 9.5 L19.5 15.5 H17.6 L16.9 14.4 H13.8 L14.6 13.2 H16.1 L15.2 11.8 L12.8 15.5 H11.3 L15 9.5Z" fill="#1b1350"/></svg>
<svg class="a" style="left:700px;top:1048px;" width="24" height="24" viewBox="0 0 24 24"><circle cx="12" cy="12" r="10.700" fill="#fff"/><path d="M7.300 3.600 C9.300 3.200 11 4.400 12 5.400 C13 4.400 14.700 3.200 16.700 3.600 C14 1.900 10 1.900 7.300 3.600Z" fill="#2a2420"/><path d="M12 8.300 C8 11.500 5.300 16 4.800 20 M12 8.300 C16 11.500 18.700 16 19.200 20" fill="none" stroke="#2a2420" stroke-width="1.500"/><path d="M5.200 5.200 C7 5 10 6.800 12 8.300 C14 6.800 17 5 18.800 5.200" fill="none" stroke="#2a2420" stroke-width="1.200"/></svg>
<svg class="a" style="left:748px;top:1048px;" width="24" height="24" viewBox="0 0 24 24"><circle cx="12" cy="12" r="9" fill="none" stroke="#9a22e6" stroke-width="4.4"/><path d="M3.5 15 A9 9 0 0 0 20.5 15" fill="none" stroke="#5d12a8" stroke-width="4.4"/></svg>
<svg class="a" style="left:798px;top:1048px;" width="24" height="24" viewBox="0 0 24 24"><path d="M3 3 H19.5 Q21.5 3 21.5 5 V23 L17 19.5 H3 Q1.5 19.5 1.5 17.5 V5 Q1.5 3 3 3Z" fill="#7d8fd8"/><path d="M5.5 15 C5.5 10 7 8 8.5 7.5 L10 7.2 L10.4 8 H12.6 L13 7.2 L14.5 7.5 C16 8 17.5 10 17.5 15 C16.5 16 15 16.3 14.5 16.3 L13.8 15.2 H9.2 L8.5 16.3 C8 16.3 6.5 16 5.500 15Z" fill="#fff"/><circle cx="9.4" cy="12.3" r="1.4" fill="#7d8fd8"/><circle cx="13.6" cy="12.3" r="1.4" fill="#7d8fd8"/></svg>
<svg class="a" style="left:846px;top:1048px;" width="24" height="24" viewBox="0 0 24 24"><circle cx="12" cy="12" r="11.5" fill="#e8453c"/><path d="M12 12 L2.04 6.25 A11.5 11.5 0 0 0 11 23.46Z" fill="#2da94f"/><path d="M12 12 L11 23.46 A11.5 11.5 0 0 0 21.96 6.25Z" fill="#fdbd00"/><path d="M12 6.25 H21.96 A11.5 11.5 0 0 0 2.04 6.25Z" fill="#e8453c"/><circle cx="12" cy="12" r="5.4" fill="#fff"/><circle cx="12" cy="12" r="4.2" fill="#4a8af4"/></svg>
<svg class="a" style="left:895px;top:1048px;" width="24" height="24" viewBox="0 0 24 24"><rect width="24" height="24" fill="#000"/><path d="M7 3.5 H10.3 L13.7 13 V3.5 H17 V20.5 H13.8 L10.3 11 V20.5 H7Z" fill="#e50914"/></svg>
<svg class="a" style="left:944px;top:1048px;" width="24" height="24" viewBox="0 0 24 24"><text x="12" y="8" font-family="Liberation Sans,sans-serif" font-weight="400" font-size="8.5" fill="#fff" text-anchor="middle">prime</text><text x="12" y="15.5" font-family="Liberation Sans,sans-serif" font-weight="400" font-size="8.5" fill="#fff" text-anchor="middle">video</text><path d="M4 18.5 Q12 23 20 18.5" fill="none" stroke="#fff" stroke-width="1.3"/></svg>
<svg class="a" style="left:993px;top:1048px;" width="24" height="24" viewBox="0 0 24 24"><defs><linearGradient id="itg" x1="0" y1="0" x2="0" y2="1"><stop offset="0" stop-color="#f8508c"/><stop offset="0.550" stop-color="#c060e0"/><stop offset="1" stop-color="#38a8f8"/></linearGradient></defs><circle cx="12" cy="12" r="11.5" fill="#f4f4f8"/><circle cx="12" cy="12" r="10" fill="none" stroke="url(#itg)" stroke-width="1.6"/><path d="M9.5 7.5 L16.5 6 V15.2 A2 1.7 0 1 1 15.2 13.6 V8.6 L10.8 9.6 V16.4 A2 1.7 0 1 1 9.500 14.8Z" fill="url(#itg)"/></svg>
<svg class="a" style="left:1042px;top:1048px;" width="24" height="24" viewBox="0 0 24 24"><rect width="24" height="24" rx="1" fill="#ffd02f"/><path d="M15.6 4 H13 L15.2 8 L10.4 4 H7.8 L10.2 8.8 L5.2 4 H2.6 L5.2 10 L2.6 20 H5.2 L10.2 7.4 L7.8 20 H10.4 L15.2 6.6 L13 20 H15.6 L20.600 5.400Z" fill="#15154a" transform="translate(0.800 0)"/></svg>
<svg class="a" style="left:1091px;top:1048px;" width="24" height="24" viewBox="0 0 24 24"><defs><linearGradient id="msg" x1="0" y1="1" x2="1" y2="0"><stop offset="0" stop-color="#1a8cff"/><stop offset="0.5" stop-color="#a033ff"/><stop offset="1" stop-color="#ff5c87"/></linearGradient></defs><path d="M12 0.8 C5.500 0.8 0.8 5.500 0.8 11.600 C0.8 14.800 2.100 17.600 4.300 19.500 V23.200 L7.800 21.300 C9.100 21.700 10.500 21.900 12 21.900 C18.500 21.900 23.200 17.400 23.200 11.600 C23.200 5.500 18.500 0.800 12 0.800Z" fill="url(#msg)"/><path d="M5.200 14.500 L10.300 8.600 L13.100 11.200 L18.800 8.600 L13.700 14.500 L10.900 11.900Z" fill="#fff"/></svg>
<svg class="a" style="left:1140px;top:1048px;" width="24" height="24" viewBox="0 0 24 24"><path d="M12 1 A11 11 0 0 0 2.600 17.700 L1 23 L6.500 21.500 A11 11 0 1 0 12 1Z" fill="#fff"/><circle cx="12" cy="12" r="9.300" fill="#2cb742"/><path d="M8.300 6.800 C7.500 7.200 6.900 8.200 7.200 9.600 C7.900 12.700 11.300 16.100 14.500 16.800 C15.800 17.100 16.800 16.500 17.200 15.700 L17.300 14.800 L14.900 13.600 L13.800 14.700 C12.100 14 10 11.900 9.300 10.200 L10.400 9.100 L9.200 6.700Z" fill="#fff"/></svg>
<svg class="a" style="left:1189px;top:1048px;" width="24" height="24" viewBox="0 0 24 24"><circle cx="12" cy="12" r="11.500" fill="#f00"/><circle cx="12" cy="12" r="6.800" fill="none" stroke="#fff" stroke-width="1.300"/><path d="M10 8.500 L16 12 L10 15.500Z" fill="#fff"/></svg>
<svg class="a" style="left:1238px;top:1048px;" width="24" height="24" viewBox="0 0 24 24"><rect x="0.500" y="0.500" width="23" height="23" fill="#4c4c4c"/><rect x="3.500" y="3.500" width="17" height="17" rx="1" fill="#fff"/><path d="M9 6 L6.500 8.500 H9Z M10 6 H14 L14.500 7 L17.500 7.500 C18.500 11 18 17 16.500 17.500 H13.500 C13 16.500 13.500 15 14.800 15 V14 C12.500 14 12 16 10 15.500 C7.500 15 6.500 12 6.500 9.500 H10Z" fill="#14a83c"/></svg>
<svg class="a" style="left:1287px;top:1048px;" width="24" height="24" viewBox="0 0 24 24"><rect x="0.600" y="0.600" width="22.800" height="22.800" fill="#05080c" stroke="#19dede" stroke-width="1.200"/><path d="M12.500 12.300 H19.300 L12 5 L4.700 12.300 L12 19.600 L14.300 17.300" fill="none" stroke="#fff" stroke-width="3.300" stroke-linejoin="miter"/><path d="M12.500 10.600 H17.500 L19.800 12.300 H12.500Z" fill="#fff"/></svg>
<svg class="a" style="left:1336px;top:1048px;" width="24" height="24" viewBox="0 0 24 24"><defs><linearGradient id="ug1347" x1="0" y1="0" x2="1" y2="1"><stop offset="0" stop-color="#000"/><stop offset="0.500" stop-color="#1c1c1c"/><stop offset="1" stop-color="#000"/></linearGradient></defs><rect x="1.500" y="1" width="21" height="22" fill="url(#ug1347)"/><g fill="none" stroke="#fff" stroke-width="1.300" stroke-linejoin="round"><path d="M12 4.500 L18.500 8.300 V15.800 L12 19.500 L5.500 15.800 V8.300Z" stroke="none"/><path d="M6.200 12 L15.300 6.300 L15.300 17.700Z"/><path d="M6.200 12 H12.500 M15.300 6.300 L12.500 12 L15.300 17.700"/></g></svg>
<svg class="a" style="left:1385px;top:1048px;" width="24" height="24" viewBox="0 0 24 24"><path d="M1.500 14.500 L11 7 H7 L8.500 5 H13.500 L12 3 L14 1.800 L22 9.500 C24 12.500 23 17 19.500 19 C16 21 11 20.500 8.500 17.500 C7.500 16.300 7.200 15 7.500 13.500 L4 16.500Z" fill="#ea7600"/><circle cx="15" cy="13" r="5" fill="#fff"/><circle cx="15" cy="13" r="2.900" fill="#265787"/></svg>
<svg class="a" style="left:1434px;top:1048px;" width="24" height="24" viewBox="0 0 24 24"><rect x="1" y="1.500" width="22" height="21" rx="2.500" fill="#e8f1fa"/><rect x="2.500" y="3" width="19" height="18" rx="2" fill="#0c7dc7"/><rect x="5" y="5.500" width="6" height="12.500" rx="1" fill="#fff"/><rect x="13" y="5.500" width="6" height="8" rx="1" fill="#fff"/></svg>
<svg class="a" style="left:1483px;top:1048px;" width="24" height="24" viewBox="0 0 24 24"><defs><linearGradient id="ug1494" x1="0" y1="0" x2="1" y2="1"><stop offset="0" stop-color="#000"/><stop offset="0.500" stop-color="#1c1c1c"/><stop offset="1" stop-color="#000"/></linearGradient></defs><rect x="1.500" y="1" width="21" height="22" fill="url(#ug1494)"/><g fill="none" stroke="#fff" stroke-width="1.300" stroke-linejoin="round"><path d="M12 4.500 L18.500 8.300 V15.800 L12 19.500 L5.500 15.800 V8.300Z" stroke="none"/><path d="M6.200 12 L15.300 6.300 L15.300 17.700Z"/><path d="M6.200 12 H12.500 M15.300 6.300 L12.500 12 L15.300 17.700"/></g></svg>
<svg class="a" style="left:1532px;top:1048px;" width="24" height="24" viewBox="0 0 24 24"><rect x="1" y="1.500" width="22" height="21" fill="#1b7fd6"/><path d="M1 22.500 V14 L8.500 7.500 L17 15 L19.500 13 L23 16 V22.500Z" fill="#0f4c94"/><path d="M1 22.500 V17 L8.500 10 L20 22.500Z" fill="#1a5fb0"/><path d="M13 22.500 L19.500 15 L23 18.500 V22.500Z" fill="#5aa2ea"/><circle cx="17.500" cy="6.500" r="2.200" fill="#fff"/></svg>
<div class="a" style="left:1569px;top:1040px;width:48px;height:40px;background:#55504b;"></div>
<svg class="a" style="left:1581px;top:1048px;" width="24" height="24" viewBox="0 0 24 24"><path d="M17.500 0.800 L23.500 3.500 V20.500 L17.500 23.200 L7 13.500 L2.800 16.800 L0.500 15.600 V8.400 L2.800 7.200 L7 10.500Z M17.500 7.200 L11.200 12 L17.500 16.800Z M2.800 9.800 V14.200 L5.200 12Z" fill="#a579e0" fill-rule="evenodd"/><path d="M17.500 0.800 L23.500 3.500 V20.500 L17.500 23.200Z" fill="#c9a8f5"/><path d="M0.500 8.400 L2.800 7.200 L17.500 23.200 L7 13.500 L2.800 16.800 L0.500 15.600Z" fill="#7a45c0" opacity="0.850"/></svg>
<div class="a" style="left:495px;top:1078px;width:40px;height:2px;background:#76b9ed;"></div>
<div class="a" style="left:838px;top:1078px;width:40px;height:2px;background:#76b9ed;"></div>
<div class="a" style="left:1132px;top:1078px;width:40px;height:2px;background:#76b9ed;"></div>
<div class="a" style="left:1279px;top:1078px;width:40px;height:2px;background:#76b9ed;"></div>
<div class="a" style="left:1475px;top:1078px;width:40px;height:2px;background:#76b9ed;"></div>
<div class="a" style="left:1524px;top:1078px;width:40px;height:2px;background:#76b9ed;"></div>
<div class="a" style="left:1569px;top:1078px;width:48px;height:2px;background:#76b9ed;"></div>
<svg class="a" style="left:1646px;top:1054px;" width="13" height="9" viewBox="0 0 13 9"><path d="M1 7.500 L6.500 2 L12 7.500" fill="none" stroke="#fff" stroke-width="1.300"/></svg>
<svg class="a" style="left:1669px;top:1051px;" width="17" height="18" viewBox="0 0 17 18"><g fill="none" stroke="#fff" stroke-width="1.100"><rect x="2.500" y="4.500" width="8" height="9" rx="1.800"/><path d="M10.500 8 L14 6 V12 L10.500 10 M4 2 Q6.500 0.500 9 2 M4 16 Q6.500 17.500 9 16"/></g></svg>
<svg class="a" style="left:1690px;top:1050px;" width="22" height="20" viewBox="0 0 22 20"><g fill="none" stroke="#fff" stroke-width="1.100"><path d="M2.500 4.500 L16 2.500 V15.500 L2.500 13.500Z"/><path d="M6.500 10.500 L9 7 L12 10 M7 7 H10"/></g><circle cx="15.500" cy="14.500" r="3.200" fill="#f7941d"/></svg>
<svg class="a" style="left:1715px;top:1051px;" width="20" height="18" viewBox="0 0 20 18"><g fill="none" stroke="#fff" stroke-width="1.100"><rect x="5.500" y="2.500" width="12" height="9"/><path d="M11.500 11.500 V15.500 M7 15.500 H16"/><rect x="1.500" y="3.500" width="3.500" height="12" fill="#2a2420"/><path d="M2.500 6 H4"/></g></svg>
<svg class="a" style="left:1739px;top:1051px;" width="20" height="18" viewBox="0 0 20 18"><g fill="none" stroke="#fff" stroke-width="1.100"><path d="M2.500 6.500 H5 L8.500 3 V15 L5 11.500 H2.500Z"/><path d="M11 6.500 Q12.500 9 11 11.500" opacity="0.900"/><path d="M13 4.500 Q15.500 9 13 13.500" opacity="0.550"/><path d="M15 2.500 Q18.500 9 15 15.500" opacity="0.350"/></g></svg>
<div class="a t" style="left:1767px;top:1052.00px;font:12px/16px 'Liberation Sans',sans-serif;color:#ffffff;letter-spacing:-1.001px;">ENG</div>
<div class="a t" style="left:1810.5px;top:1042.00px;font:12px/16px 'Liberation Sans',sans-serif;color:#ffffff;letter-spacing:-0.313px;">2:36 PM</div>
<div class="a t" style="left:1802.5px;top:1060.00px;font:12px/16px 'Liberation Sans',sans-serif;color:#ffffff;letter-spacing:-0.288px;">2021-05-14</div>
<svg class="a" style="left:1878px;top:1050px;" width="30" height="26" viewBox="0 0 30 26"><path d="M1.500 2.500 H17.500 V14.500 H6 L1.500 18.500Z" fill="#fff"/><path d="M4.500 6 H14.500 M4.500 8.800 H14.500 M4.500 11.600 H14.500" stroke="#2a2420" stroke-width="1"/><circle cx="15.500" cy="15.500" r="8.200" fill="#2a2420" stroke="#8a8886" stroke-width="1"/><text x="15.500" y="19.500" font-family="Liberation Sans,sans-serif" font-size="11" fill="#fff" text-anchor="middle">25</text></svg>
<div class="a" style="left:1914px;top:1040px;width:1px;height:40px;background:#5a5653;"></div>
</body></html>
